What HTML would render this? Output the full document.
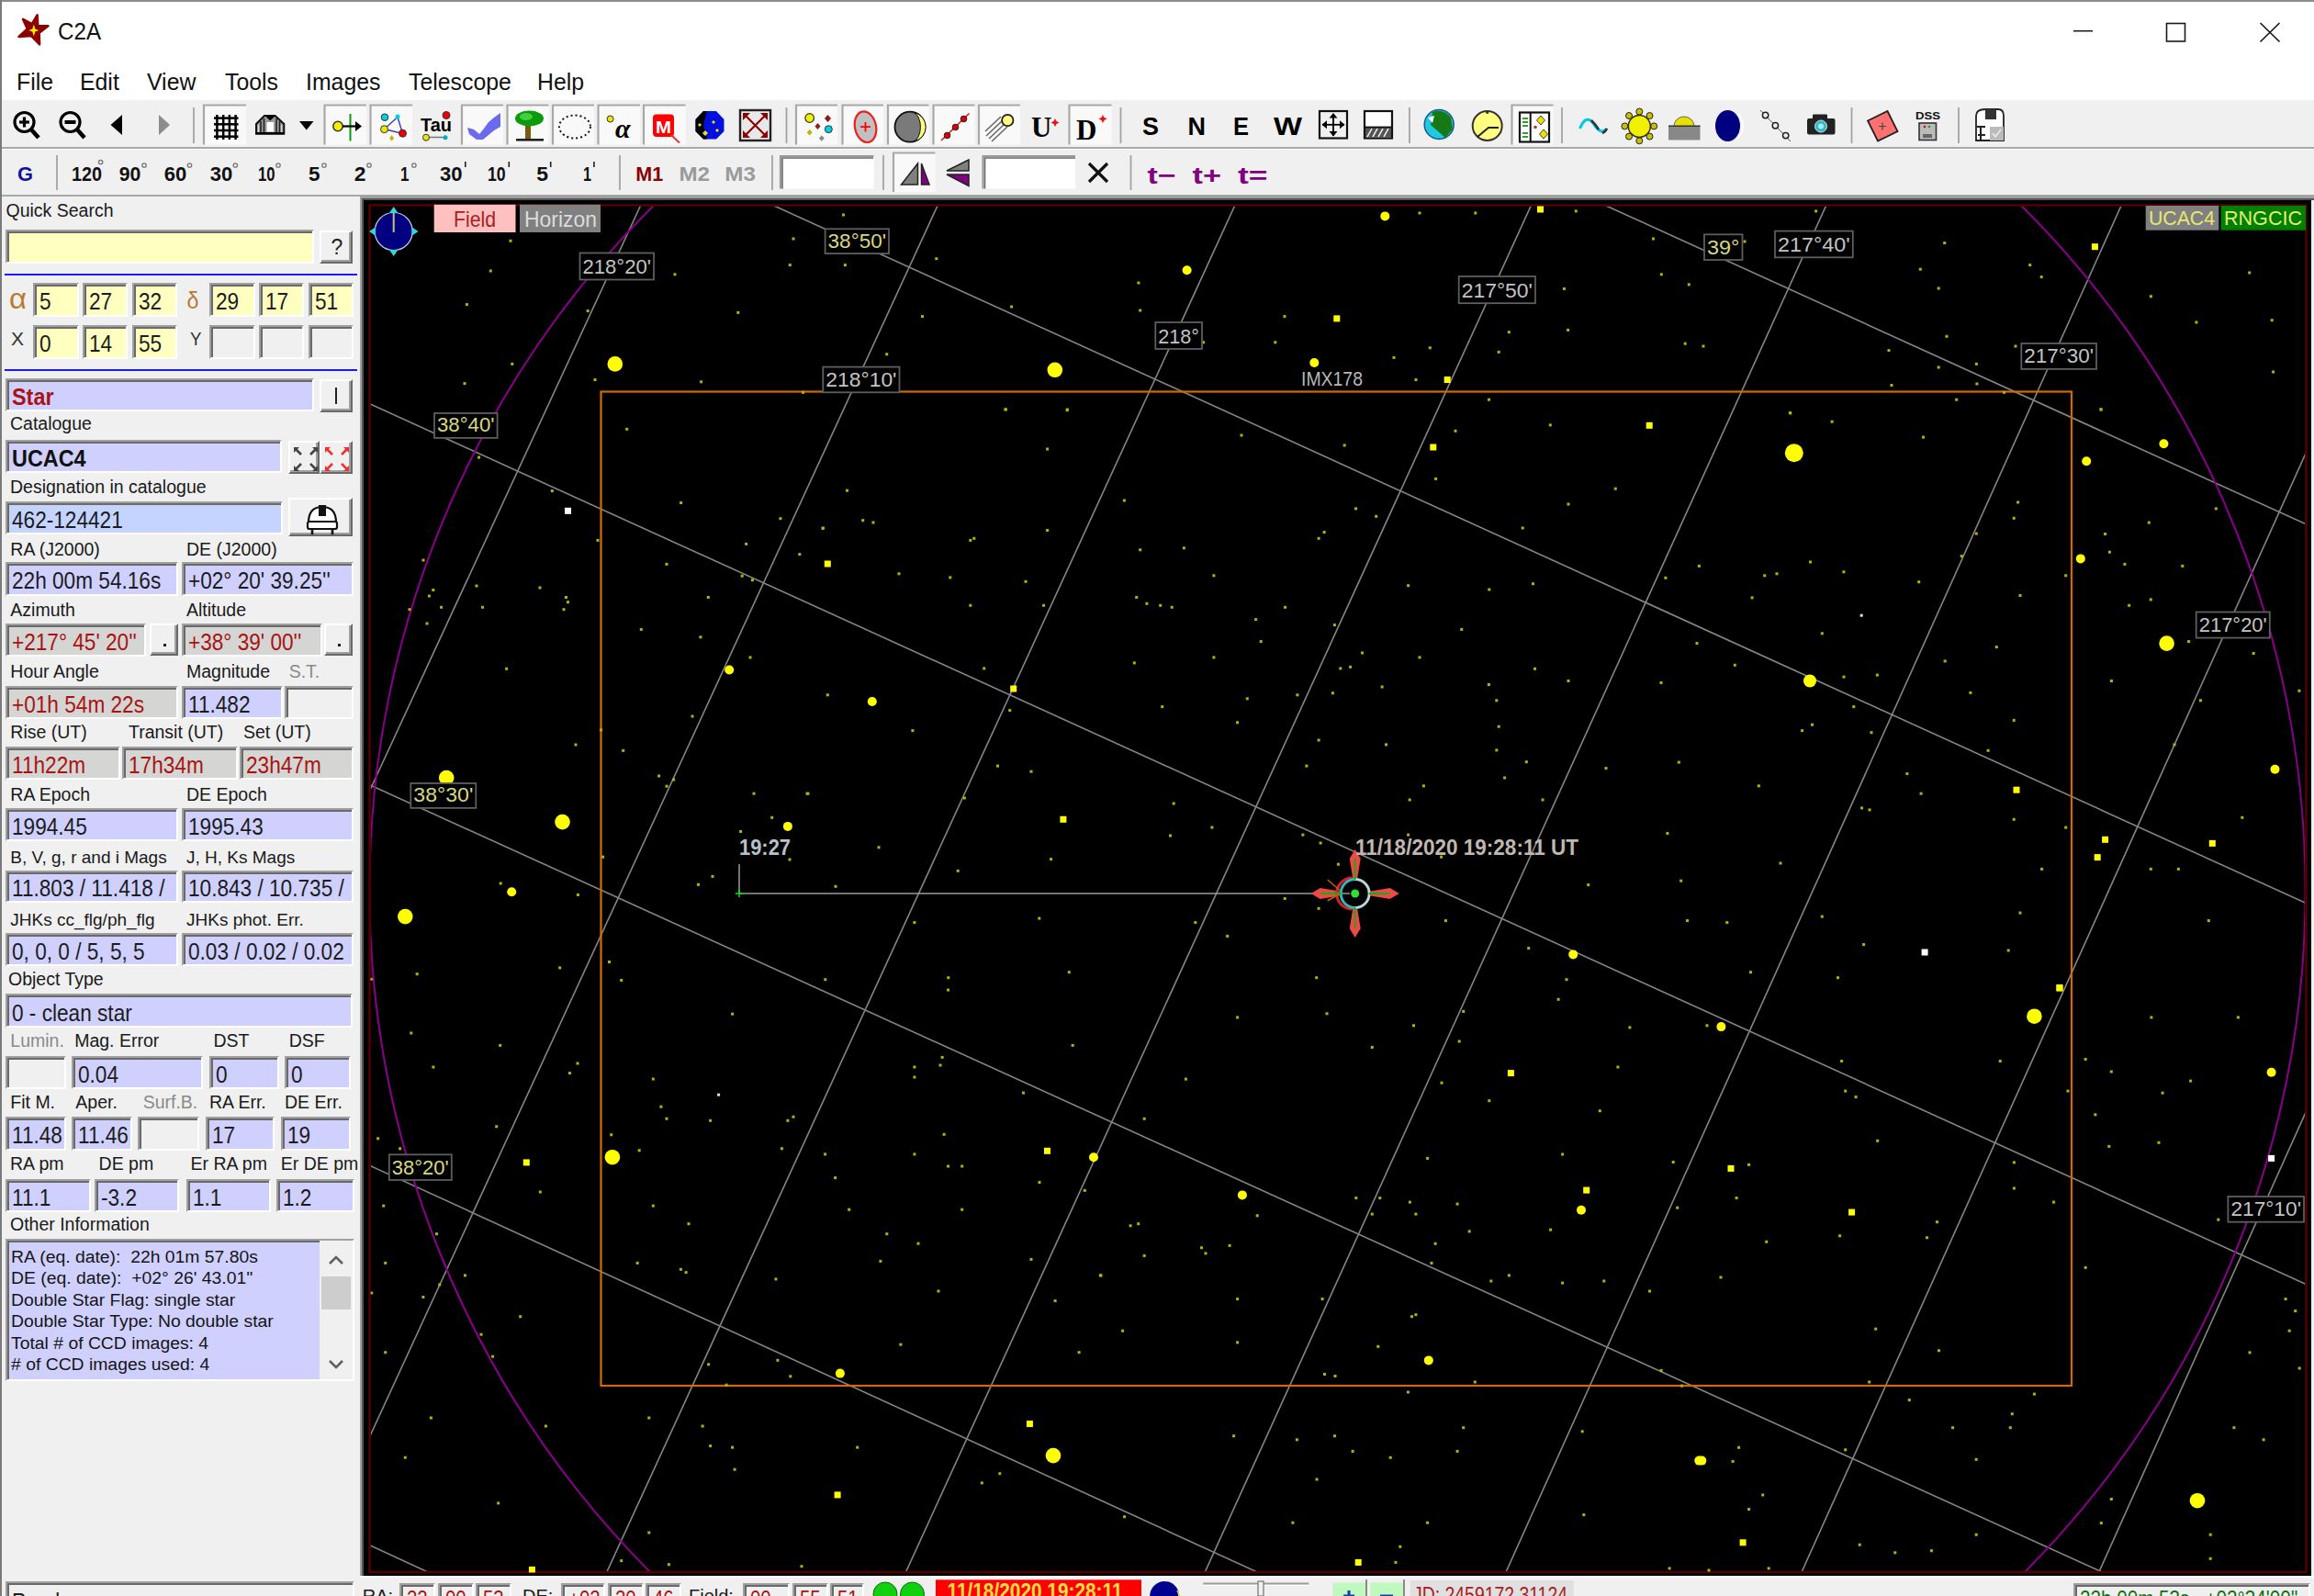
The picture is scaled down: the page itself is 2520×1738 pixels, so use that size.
<!DOCTYPE html>
<html><head><meta charset="utf-8">
<style>
html,body{margin:0;padding:0;}
body{width:2520px;height:1738px;overflow:hidden;position:relative;background:#f0f0f0;font-family:"Liberation Sans",sans-serif;}
.a{position:absolute;}
.t{position:absolute;white-space:nowrap;line-height:1;}
.lb{position:absolute;white-space:nowrap;line-height:1;font-size:19.5px;color:#1a1a1a;}
.in{position:absolute;box-sizing:border-box;border-top:2px solid #a0a0a0;border-left:2px solid #a0a0a0;border-bottom:2px solid #fff;border-right:2px solid #fff;box-shadow:inset 2px 2px 0 #6a6a6a;overflow:hidden;}
.in span{position:absolute;left:6px;white-space:nowrap;line-height:1;font-size:26px;color:#1c1c1c;transform-origin:0 0;transform:scaleX(0.87);}
.bt{position:absolute;box-sizing:border-box;background:#f0f0f0;border-top:2px solid #fff;border-left:2px solid #fff;border-bottom:2px solid #696969;border-right:2px solid #696969;box-shadow:inset -2px -2px 0 #a0a0a0;}
.lav{background:#d2d2ff;}
.yel{background:#ffffc4;}
.gry{background:#d6d6d4;}
.red span{color:#a51414;}
.sep{position:absolute;width:2px;background:#b4b4b4;border-right:1px solid #fff;}
</style></head>
<body>

<!-- window borders -->
<div class="a" style="left:0;top:0;width:2520px;height:2px;background:#8c8c8c"></div>
<div class="a" style="left:0;top:0;width:2px;height:1738px;background:#7a7a7a"></div>
<!-- title + menu bar -->
<div class="a" style="left:2px;top:2px;width:2518px;height:107px;background:#fff"></div>

<!-- toolbar lines -->
<div class="a" style="left:2px;top:160px;width:2518px;height:2px;background:#a9a9a9"></div>
<div class="a" style="left:2px;top:162px;width:2518px;height:1px;background:#fff"></div>
<div class="a" style="left:2px;top:212px;width:2518px;height:2px;background:#a9a9a9"></div>

<!-- sky frame -->
<div class="a" style="left:392px;top:213px;width:2128px;height:2.5px;background:#a0a0a0"></div>
<div class="a" style="left:392px;top:213px;width:2px;height:1505px;background:#a0a0a0"></div>
<div class="a" style="left:394px;top:215.5px;width:2126px;height:2.5px;background:#555"></div>
<div class="a" style="left:394px;top:215.5px;width:1.5px;height:1502px;background:#555"></div>
<div class="a" style="left:395.5px;top:218px;width:2121.5px;height:1497.5px;background:#000"></div>
<div class="a" style="left:392px;top:1715.5px;width:2128px;height:2.5px;background:#fafafa"></div>
<!-- title bar -->
<svg class="a" style="left:0;top:0" width="2520" height="215">
<!-- app icon star -->
<polygon points="25.0,20.9 34.7,26.2 40.6,16.3 41.2,27.9 52.4,28.3 42.7,35.7 43.1,48.4 34.1,39.1 20.5,39.9 29.8,31.5" fill="#8a0000" stroke="#8a0000" stroke-width="2.5" stroke-linejoin="round"/>
<polygon points="36.8,26.5 38.3,31.5 42.3,33 38.3,34.5 36.8,39.5 35.3,34.5 31.3,33 35.3,31.5" fill="#ffee00"/>
<!-- window controls -->
<rect x="2258" y="33" width="21" height="1.5" fill="#1a1a1a"/>
<rect x="2359.5" y="25.5" width="20" height="19.5" fill="none" stroke="#1a1a1a" stroke-width="1.6"/>
<path d="M2461.5 25 L2482.5 45.5 M2482.5 25 L2461.5 45.5" stroke="#1a1a1a" stroke-width="1.7"/>

<!-- toolbar 1 -->
<g stroke="#a3a3a3" stroke-width="1.8">
<line x1="211" y1="117" x2="211" y2="156"/>
<line x1="856.5" y1="117" x2="856.5" y2="156"/>
<line x1="1220.5" y1="117" x2="1220.5" y2="156"/>
<line x1="1535" y1="117" x2="1535" y2="156"/>
<line x1="1701" y1="117" x2="1701" y2="156"/>
<line x1="2016.5" y1="117" x2="2016.5" y2="156"/>
<line x1="2133" y1="117" x2="2133" y2="156"/>
</g>
<!-- pressed boxes -->
<g fill="#f9f9f9">
<rect x="221" y="113.5" width="47" height="44"/>
<rect x="352.5" y="113.5" width="46.5" height="44"/>
<rect x="402.5" y="113.5" width="46.5" height="44"/>
<rect x="502" y="113.5" width="46" height="44"/>
<rect x="551.5" y="113.5" width="46" height="44"/>
<rect x="601" y="113.5" width="46" height="44"/>
<rect x="650.5" y="113.5" width="46.5" height="44"/>
<rect x="700" y="113.5" width="46.5" height="44"/>
<rect x="866" y="113.5" width="46" height="44"/>
<rect x="916.5" y="113.5" width="45.5" height="44"/>
<rect x="966" y="113.5" width="45.5" height="44"/>
<rect x="1015.5" y="113.5" width="46" height="44"/>
<rect x="1065" y="113.5" width="46" height="44"/>
<rect x="1163.5" y="113.5" width="47" height="44"/>
<rect x="1645.5" y="113.5" width="46" height="44"/>
</g>
<g fill="none" stroke="#a8a8a8" stroke-width="2.2">
<path d="M222 157.5 V114.5 H268"/>
<path d="M353.5 157.5 V114.5 H399"/>
<path d="M403.5 157.5 V114.5 H449"/>
<path d="M503 157.5 V114.5 H548"/>
<path d="M552.5 157.5 V114.5 H597.5"/>
<path d="M602 157.5 V114.5 H647"/>
<path d="M651.5 157.5 V114.5 H697"/>
<path d="M701 157.5 V114.5 H746.5"/>
<path d="M867 157.5 V114.5 H912"/>
<path d="M917.5 157.5 V114.5 H962"/>
<path d="M967 157.5 V114.5 H1011.5"/>
<path d="M1016.5 157.5 V114.5 H1061.5"/>
<path d="M1066 157.5 V114.5 H1111"/>
<path d="M1164.5 157.5 V114.5 H1210.5"/>
<path d="M1646.5 157.5 V114.5 H1691.5"/>
</g>
<!-- zoom in / out -->
<g fill="none" stroke="#000" stroke-width="3.2">
<circle cx="26.5" cy="133" r="10.5"/>
<line x1="34" y1="141" x2="42" y2="150" stroke-width="4.5"/>
<line x1="21" y1="133" x2="32" y2="133"/><line x1="26.5" y1="127.5" x2="26.5" y2="138.5"/>
<circle cx="76.5" cy="133" r="10.5"/>
<line x1="84" y1="141" x2="92" y2="150" stroke-width="4.5"/>
<line x1="70.5" y1="133" x2="82.5" y2="133" stroke-width="4"/>
</g>
<polygon points="133,125 133,147 120.5,136" fill="#000"/>
<polygon points="173,125 173,147 185,136" fill="#8c8c8c"/>
<!-- grid icon -->
<g stroke="#000" stroke-width="2.5">
<line x1="236.4" y1="125" x2="236.4" y2="152"/><line x1="243.2" y1="125" x2="243.2" y2="152"/><line x1="249.9" y1="125" x2="249.9" y2="152"/><line x1="256.6" y1="125" x2="256.6" y2="152"/>
<line x1="233" y1="128.6" x2="259.5" y2="128.6"/><line x1="233" y1="135.3" x2="259.5" y2="135.3"/><line x1="233" y1="142" x2="259.5" y2="142"/><line x1="233" y1="148.7" x2="259.5" y2="148.7"/>
</g>
<!-- dome -->
<polygon points="279,145.5 279,135 288,126 299.6,126 309.3,135 309.3,145.5" fill="#9a9a9a" stroke="#111" stroke-width="2"/>
<g stroke="#222" stroke-width="1.6"><line x1="284" y1="132" x2="284" y2="145"/><line x1="287.5" y1="129" x2="287.5" y2="145"/><line x1="301" y1="129" x2="301" y2="145"/><line x1="304.5" y1="132" x2="304.5" y2="145"/></g>
<g stroke="#ddd" stroke-width="1.2"><line x1="281.5" y1="136" x2="281.5" y2="144"/><line x1="306.5" y1="136" x2="306.5" y2="144"/></g>
<polygon points="288.5,126 300,126 294.2,131.5" fill="#000"/>
<rect x="290.5" y="133" width="7.5" height="10.5" fill="#fff"/>
<rect x="278.5" y="144" width="31.5" height="2.5" fill="#000"/>
<polygon points="326,132 341.5,132 333.75,141.5" fill="#000"/>
<!-- target icon -->
<circle cx="368" cy="137.5" r="5.2" fill="#f0f000" stroke="#333" stroke-width="1.5"/>
<line x1="381.5" y1="124" x2="381.5" y2="153.5" stroke="#0a9a0a" stroke-width="2"/>
<line x1="373" y1="137.5" x2="389" y2="137.5" stroke="#000" stroke-width="2.2"/>
<polygon points="387,132 394,137.5 387,143" fill="#000"/>
<!-- triangle stars -->
<path d="M433 127.5 L418.5 140.5 L438.5 145.5 Z" fill="none" stroke="#4040c0" stroke-width="1.5"/>
<circle cx="419" cy="127.7" r="3.8" fill="#00d0e0" stroke="#333" stroke-width="1"/>
<circle cx="433" cy="127" r="2.5" fill="#00d0e0"/>
<circle cx="418.5" cy="140.7" r="4" fill="#e8e800" stroke="#333" stroke-width="1"/>
<circle cx="438.5" cy="145.2" r="4" fill="#f00000" stroke="#333" stroke-width="1"/>
<polygon points="426.6,147 429,150.4 426.6,153.8 424.2,150.4" fill="#c8b000"/>
<!-- Tau -->
<text x="458" y="143" font-family="Liberation Sans" font-weight="bold" font-size="21" fill="#000" textLength="34" lengthAdjust="spacingAndGlyphs">Tau</text>
<circle cx="486" cy="125.5" r="4" fill="#f00000" stroke="#333" stroke-width="1"/>
<line x1="464" y1="149.5" x2="485" y2="149.5" stroke="#777" stroke-width="1.5"/>
<circle cx="464" cy="149.7" r="3.5" fill="#e8e800" stroke="#333" stroke-width="1"/>
<circle cx="485" cy="149.7" r="2.5" fill="#00b0c0"/>
<!-- milky way -->
<path d="M509 139 L516 141 L522 146 L527 140 L532 133 L538 128 L545 123 L545 138 L538 142 L532 147 L526 152 L519 152 L511 146 Z" fill="#6a6aee"/>
<!-- tree -->
<rect x="572" y="135" width="6" height="16" fill="#7a5a10"/>
<ellipse cx="576.5" cy="129" rx="15.5" ry="8.5" fill="#0a9a0a"/>
<ellipse cx="573" cy="127" rx="7" ry="4" fill="#40d040"/>
<rect x="562" y="151" width="30" height="2.6" fill="#222"/>
<!-- dotted ellipse -->
<ellipse cx="626" cy="138" rx="17" ry="12.5" fill="none" stroke="#111" stroke-width="2" stroke-dasharray="2 3"/>
<!-- alpha -->
<circle cx="664.6" cy="129.5" r="3.5" fill="#e8e800" stroke="#333" stroke-width="1"/>
<text x="670" y="150" font-family="Liberation Serif" font-style="italic" font-weight="bold" font-size="30" fill="#000">α</text>
<!-- M -->
<rect x="711" y="124.5" width="23" height="24.5" rx="4" fill="#f00" />
<text x="714" y="145" font-family="Liberation Sans" font-weight="bold" font-size="19" fill="#fff" textLength="17" lengthAdjust="spacingAndGlyphs">M</text>
<line x1="731" y1="147" x2="740" y2="155.5" stroke="#f03030" stroke-width="2"/>
<!-- globe -->
<polygon points="766,121 780,121 788.5,130 788.5,143 780,151.5 766,151.5 757.5,143 757.5,130" fill="#0010e0"/>
<path d="M766 121 L770 121 L766 136 L770 151.5 L766 151.5 L757.5 143 L757.5 130 Z" fill="#000"/>
<g fill="#f0e000"><polygon points="768,142 771,145 768,148 765,145"/><polygon points="777,131 779,133 777,135 775,133"/><polygon points="781,140 783,142 781,144 779,142"/><polygon points="762,134 764,136 762,138 760,136"/></g>
<!-- X arrows box -->
<rect x="806" y="120" width="33" height="33" fill="#e8e8e8" stroke="#222" stroke-width="2.4"/>
<g stroke="#8b0000" stroke-width="2.2"><line x1="810" y1="124" x2="835" y2="149"/><line x1="835" y1="124" x2="810" y2="149"/></g>
<g fill="#8b0000"><polygon points="809,123 817,123 809,131"/><polygon points="836,123 828,123 836,131"/><polygon points="809,150 817,150 809,142"/><polygon points="836,150 828,150 836,142"/></g>
<!-- stars icon -->
<circle cx="881.7" cy="128.5" r="4.8" fill="#f0f000" stroke="#333" stroke-width="1.2"/>
<polygon points="901.5,125 905,129 901.5,133 898,129" fill="#8b1a1a"/>
<polygon points="890.5,134 893.5,137.5 890.5,141 887.5,137.5" fill="#8b1a1a"/>
<circle cx="902.3" cy="140.7" r="4" fill="#00d0e0" stroke="#333" stroke-width="1"/>
<polygon points="881.7,141 884.7,144.2 881.7,147.4 878.7,144.2" fill="#c8b000"/>
<polygon points="894.8,147.5 897.8,150.6 894.8,153.7 891.8,150.6" fill="#888"/>
<!-- red ellipse -->
<ellipse cx="942.5" cy="138.2" rx="11.5" ry="17" transform="rotate(-12 942.5 138.2)" fill="#c0c0c0" stroke="#f02020" stroke-width="2.2"/>
<path d="M942.5 133 V143.5 M937 138.2 H948" stroke="#f00" stroke-width="1.8"/>
<!-- moon -->
<circle cx="991" cy="138.2" r="16.5" fill="#7a7a7a" stroke="#111" stroke-width="1.8"/>
<path d="M995 122.5 A16 16 0 0 1 995 154 A9 16 0 0 0 995 122.5 Z" fill="#ffff80" stroke="#111" stroke-width="1"/>
<!-- red dotted line -->
<line x1="1025" y1="153" x2="1055.5" y2="123.5" stroke="#e01010" stroke-width="1.5"/>
<g fill="#e00000" stroke="#222" stroke-width="1"><circle cx="1031.5" cy="147.5" r="3.3"/><circle cx="1040.5" cy="138.5" r="3.3"/><circle cx="1049.5" cy="129.5" r="3.3"/></g>
<!-- comet -->
<g stroke="#666" stroke-width="1.6"><line x1="1092" y1="131" x2="1074" y2="148"/><line x1="1094" y1="135" x2="1077" y2="151"/><line x1="1097" y1="138" x2="1080" y2="154"/><line x1="1090" y1="127" x2="1073" y2="143"/></g>
<circle cx="1097.3" cy="131" r="6.2" fill="#ffff80" stroke="#222" stroke-width="1.8"/>
<!-- U+ D+ -->
<text x="1123" y="149" font-family="Liberation Serif" font-weight="bold" font-size="31" fill="#000">U</text>
<polygon points="1149,129 1150.5,132 1153.5,133.4 1150.5,135 1149,138 1147.5,135 1144.5,133.4 1147.5,132" fill="#f01010"/>
<text x="1172" y="152" font-family="Liberation Serif" font-weight="bold" font-size="31" fill="#000">D</text>
<polygon points="1201,125 1202.5,128 1205.5,129.3 1202.5,131 1201,134 1199.5,131 1196.5,129.3 1199.5,128" fill="#f01010"/>
<!-- S N E W -->
<g font-family="Liberation Sans" font-weight="bold" font-size="28" fill="#000">
<text x="1244" y="146.5" textLength="18" lengthAdjust="spacingAndGlyphs">S</text>
<text x="1293.5" y="146.5" textLength="19.5" lengthAdjust="spacingAndGlyphs">N</text>
<text x="1343" y="146.5" textLength="17" lengthAdjust="spacingAndGlyphs">E</text>
<text x="1387" y="146.5" textLength="31" lengthAdjust="spacingAndGlyphs">W</text>
</g>
<!-- move box -->
<rect x="1437" y="121" width="30" height="29.5" fill="none" stroke="#111" stroke-width="2.2"/>
<g stroke="#000" stroke-width="1.8"><line x1="1452" y1="124" x2="1452" y2="148"/><line x1="1440" y1="135.8" x2="1464" y2="135.8"/></g>
<g fill="#000"><polygon points="1452,123 1456.5,128.5 1447.5,128.5"/><polygon points="1452,148.5 1456.5,143 1447.5,143"/><polygon points="1439.5,135.8 1445,131.3 1445,140.3"/><polygon points="1464.5,135.8 1459,131.3 1459,140.3"/></g>
<!-- hatched rect -->
<rect x="1486" y="121" width="30" height="29.5" fill="#fff" stroke="#111" stroke-width="2.2"/>
<rect x="1487" y="139" width="28" height="10.5" fill="#555"/>
<g stroke="#fff" stroke-width="1.5"><line x1="1489" y1="149" x2="1494" y2="140"/><line x1="1495" y1="149" x2="1500" y2="140"/><line x1="1501" y1="149" x2="1506" y2="140"/><line x1="1507" y1="149" x2="1512" y2="140"/></g>
<line x1="1486" y1="138.5" x2="1516" y2="138.5" stroke="#111" stroke-width="1.8"/>
<!-- earth -->
<circle cx="1567.2" cy="135.5" r="16" fill="#20c8e0" stroke="#1a5a8a" stroke-width="1.5"/>
<path d="M1560 122 Q1572 118 1580 128 L1582 140 L1574 150 L1566 143 L1558 136 Z" fill="#157a15"/>
<path d="M1555 128 L1562 126 L1560 134 Z" fill="#fff"/>
<!-- clock -->
<circle cx="1619.7" cy="137" r="16" fill="#ffff80" stroke="#333" stroke-width="2"/>
<path d="M1609 149 L1621 139 L1632 139" fill="none" stroke="#222" stroke-width="2"/>
<circle cx="1619.7" cy="122.5" r="1.5" fill="#333"/>
<!-- split icon -->
<rect x="1655" y="122.5" width="32" height="32" fill="#fff" stroke="#111" stroke-width="2.2"/>
<line x1="1666.7" y1="122" x2="1666.7" y2="155" stroke="#111" stroke-width="2"/>
<g stroke="#30a030" stroke-width="2"><line x1="1658" y1="129" x2="1664" y2="129"/><line x1="1658" y1="133" x2="1664" y2="133"/><line x1="1658" y1="137" x2="1664" y2="137"/><line x1="1658" y1="145" x2="1664" y2="145"/><line x1="1658" y1="149" x2="1664" y2="149"/></g>
<polygon points="1678,126 1682.5,131 1678,136 1673.5,131" fill="#f0e000" stroke="#444" stroke-width="1"/>
<polygon points="1681,141 1685.5,146 1681,151 1676.5,146" fill="#f0e000" stroke="#444" stroke-width="1"/>
<circle cx="1672" cy="138.5" r="1.8" fill="#c03030"/>
<!-- wave -->
<path d="M1720.5 140 Q1727 124 1735 134 Q1743 148 1750 140" fill="none" stroke="#00c8e8" stroke-width="3"/>
<path d="M1733 131 Q1738 136 1741 141 M1745 145 Q1748 144 1750 140" fill="none" stroke="#333" stroke-width="2.5"/>
<!-- sun -->
<g fill="#c8c000" stroke="#222" stroke-width="1">
<circle cx="1785.3" cy="121.5" r="3.5"/><circle cx="1785.3" cy="153.3" r="3.5"/><circle cx="1769.4" cy="137.4" r="3.5"/><circle cx="1801.2" cy="137.4" r="3.5"/>
<circle cx="1774" cy="126" r="3.5"/><circle cx="1796.5" cy="126" r="3.5"/><circle cx="1774" cy="148.6" r="3.5"/><circle cx="1796.5" cy="148.6" r="3.5"/>
</g>
<circle cx="1785.3" cy="137.4" r="12" fill="#f0f000" stroke="#333" stroke-width="1.5"/>
<!-- dome -->
<path d="M1823 137.5 A11 10.5 0 0 1 1845 137.5 Z" fill="#e8e000" stroke="#666" stroke-width="1"/>
<rect x="1817" y="137" width="34.5" height="15.5" fill="#888"/>
<rect x="1817" y="136.5" width="34.5" height="1.5" fill="#333"/>
<!-- navy ellipse -->
<ellipse cx="1881.5" cy="137" rx="13.5" ry="17" fill="#000080"/>
<path d="M1893 124 A13.5 17 0 0 1 1893 150" fill="none" stroke="#fff" stroke-width="2"/>
<!-- dotted line -->
<line x1="1917" y1="120" x2="1950" y2="154" stroke="#555" stroke-width="1"/>
<g fill="#eee" stroke="#222" stroke-width="1.5"><circle cx="1922.6" cy="125.5" r="3.2"/><circle cx="1933.4" cy="136.8" r="3.2"/><circle cx="1944.7" cy="147.6" r="3.2"/></g>
<!-- camera -->
<rect x="1968" y="129" width="30.5" height="17.5" rx="2" fill="#222"/>
<rect x="1974" y="124.5" width="16" height="6" rx="1" fill="#222"/>
<circle cx="1983" cy="137.5" r="6.5" fill="#30b8d0" stroke="#ddd" stroke-width="1"/>
<circle cx="1983" cy="137.5" r="3" fill="#a0f0ff"/>
<!-- red diamond -->
<polygon points="2034,131.5 2055.5,121 2066.5,143 2045,153.5" fill="#ff7070" stroke="#222" stroke-width="1.8"/>
<path d="M2046 137.5 h8 M2050 133.5 v8" stroke="#444" stroke-width="1.2"/>
<!-- DSS -->
<text x="2086" y="130" font-family="Liberation Sans" font-weight="bold" font-size="10.5" fill="#111" textLength="27" lengthAdjust="spacingAndGlyphs">DSS</text>
<rect x="2090" y="134" width="18.5" height="18.5" fill="#bbb" stroke="#333" stroke-width="1.6"/>
<rect x="2094" y="146" width="10" height="4" fill="#666"/>
<circle cx="2096" cy="138" r="1.3" fill="#e00"/><circle cx="2101" cy="138" r="1.3" fill="#0b0"/>
<!-- floppy -->
<path d="M2152 126 Q2152 119 2162 119 L2176 119 Q2182 119 2182 126 L2182 153 L2152 153 Z" fill="#fff" stroke="#222" stroke-width="1.8"/>
<rect x="2162" y="119" width="12" height="11" fill="#333"/>
<rect x="2167" y="138" width="15" height="15" fill="#bbb"/>
<path d="M2170 145 L2173 149 L2179 141" fill="none" stroke="#eee" stroke-width="1.6"/>
<path d="M2153 138 L2162 138 M2157 138 L2157 153 M2154 147 L2162 147" stroke="#222" stroke-width="2"/>

<!-- toolbar 2 -->
<g stroke="#a3a3a3" stroke-width="1.8">
<line x1="62" y1="169" x2="62" y2="207"/>
<line x1="675" y1="169" x2="675" y2="207"/>
<line x1="841" y1="169" x2="841" y2="207"/>
<line x1="962" y1="169" x2="962" y2="207"/>
<line x1="1231.5" y1="169" x2="1231.5" y2="207"/>
</g>
<g font-family="Liberation Sans" font-weight="bold" font-size="21.5" fill="#111">
<text x="19" y="197.2" fill="#1010a0" textLength="17" lengthAdjust="spacingAndGlyphs">G</text>
<text x="78" y="197.2" textLength="33" lengthAdjust="spacingAndGlyphs">120</text>
<text x="129.8" y="197.2" textLength="23.6" lengthAdjust="spacingAndGlyphs">90</text>
<text x="178.8" y="197.2" textLength="24.5" lengthAdjust="spacingAndGlyphs">60</text>
<text x="228.7" y="197.2" textLength="24.5" lengthAdjust="spacingAndGlyphs">30</text>
<text x="281" y="197.2" textLength="18.5" lengthAdjust="spacingAndGlyphs">10</text>
<text x="336" y="197.2" textLength="12.5" lengthAdjust="spacingAndGlyphs">5</text>
<text x="385.7" y="197.2" textLength="12.7" lengthAdjust="spacingAndGlyphs">2</text>
<text x="436" y="197.2" textLength="9.4" lengthAdjust="spacingAndGlyphs">1</text>
<text x="479" y="197.2" textLength="24.5" lengthAdjust="spacingAndGlyphs">30</text>
<text x="531" y="197.2" textLength="19.7" lengthAdjust="spacingAndGlyphs">10</text>
<text x="584.2" y="197.2" textLength="12.8" lengthAdjust="spacingAndGlyphs">5</text>
<text x="635" y="197.2" textLength="9" lengthAdjust="spacingAndGlyphs">1</text>
<text x="692.2" y="197.2" fill="#8b0000" textLength="30" lengthAdjust="spacingAndGlyphs">M1</text>
<text x="739.4" y="197.2" fill="#9a9a9a" textLength="33.6" lengthAdjust="spacingAndGlyphs">M2</text>
<text x="789.3" y="197.2" fill="#9a9a9a" textLength="33.7" lengthAdjust="spacingAndGlyphs">M3</text>
</g>
<g fill="none" stroke="#777" stroke-width="1.3">
<circle cx="109.6" cy="176.5" r="2.2"/><circle cx="157" cy="180" r="2.2"/><circle cx="206.5" cy="180" r="2.2"/><circle cx="256.3" cy="180" r="2.2"/><circle cx="303" cy="180" r="2.2"/><circle cx="353" cy="180" r="2.2"/><circle cx="402" cy="180" r="2.2"/><circle cx="450.9" cy="180" r="2.2"/>
</g>
<g stroke="#222" stroke-width="1.6">
<line x1="506.8" y1="176" x2="506.8" y2="182"/><line x1="554.3" y1="176" x2="554.3" y2="182"/><line x1="599.7" y1="176" x2="599.7" y2="182"/><line x1="646.9" y1="176" x2="646.9" y2="182"/>
</g>
<!-- inputs -->
<rect x="849" y="169" width="102.5" height="36.5" fill="#fff"/>
<path d="M850 205.5 V170 H951.5" fill="none" stroke="#9a9a9a" stroke-width="2.2"/>
<path d="M852 205.5 V172 H951" fill="none" stroke="#6a6a6a" stroke-width="1.6"/>
<rect x="1069.5" y="169" width="101.5" height="36.5" fill="#fff"/>
<path d="M1070.5 205.5 V170 H1171" fill="none" stroke="#9a9a9a" stroke-width="2.2"/>
<path d="M1072.5 205.5 V172 H1171" fill="none" stroke="#6a6a6a" stroke-width="1.6"/>
<!-- mirror pressed -->
<rect x="972" y="165.5" width="46.5" height="43.5" fill="#f9f9f9"/>
<path d="M973 209 V166.5 H1018.5" fill="none" stroke="#a8a8a8" stroke-width="2.2"/>
<polygon points="999.5,178 999.5,201 981.5,201" fill="#808080" stroke="#222" stroke-width="1.5"/>
<polygon points="1003.5,178 1003.5,201 1012,201" fill="#800080" stroke="#222" stroke-width="1.5"/>
<polygon points="1055,174 1055,186 1031,186" fill="#808080" stroke="#222" stroke-width="1.5"/>
<polygon points="1055,190 1055,202.5 1031,190" fill="#800080" stroke="#222" stroke-width="1.5"/>
<path d="M1186 178 L1206 198 M1206 178 L1186 198" stroke="#111" stroke-width="3.2"/>
<g font-family="Liberation Sans" font-weight="bold" font-size="26" fill="#800080">
<text x="1249.5" y="199.5" textLength="31" lengthAdjust="spacingAndGlyphs">t−</text>
<text x="1298.5" y="199.5" textLength="31.5" lengthAdjust="spacingAndGlyphs">t+</text>
<text x="1348" y="199.5" textLength="32.5" lengthAdjust="spacingAndGlyphs">t=</text>
</g>
</svg>
<div class="t" style="left:63.4px;top:21.3px;font-size:26px;color:#111;transform:scaleX(0.93);transform-origin:0 0">C2A</div>
<div class="t" style="left:18px;top:75.5px;font-size:26px;color:#111;transform-origin:0 0;">
<span class="t" style="transform:scaleX(0.955);transform-origin:0 0;left:0">File</span><span class="t" style="transform:scaleX(0.955);transform-origin:0 0;left:69px">Edit</span><span class="t" style="transform:scaleX(0.955);transform-origin:0 0;left:141.7px">View</span><span class="t" style="transform:scaleX(0.955);transform-origin:0 0;left:226.8px">Tools</span><span class="t" style="transform:scaleX(0.955);transform-origin:0 0;left:314.6px">Images</span><span class="t" style="transform:scaleX(0.955);transform-origin:0 0;left:427.3px">Telescope</span><span class="t" style="transform:scaleX(0.955);transform-origin:0 0;left:567.3px">Help</span>
</div>
<div class="a" style="left:388px;top:214px;width:4px;height:1504px;background:#f0f0f0"></div>
<div class="t" style="left:6.5px;top:219.7px;font-size:19.5px;color:#1a1a1a;">Quick Search</div>
<div class="in" style="left:5.5px;top:249.5px;width:336.5px;height:37.5px;background:#ffffc0"></div>
<div class="bt" style="left:347.5px;top:250.5px;width:36.5px;height:36.5px"><div class="t" style="left:11px;top:5px;font-size:23px;color:#222">?</div></div>
<div class="a" style="left:5px;top:297.5px;width:384px;height:2.5px;background:#1a1aff"></div>
<svg class="a" style="left:0;top:300px" width="230" height="100"><text x="10" y="36" font-family="Liberation Sans" font-size="31" fill="#b87a30" textLength="19" lengthAdjust="spacingAndGlyphs">α</text><text x="203.5" y="36" font-family="Liberation Sans" font-size="26" fill="#b87a30" textLength="13" lengthAdjust="spacingAndGlyphs">δ</text><text x="12" y="75.6" font-family="Liberation Sans" font-size="19.5" fill="#333" textLength="14" lengthAdjust="spacingAndGlyphs">X</text><text x="207" y="75.6" font-family="Liberation Sans" font-size="19.5" fill="#333" textLength="12.5" lengthAdjust="spacingAndGlyphs">Y</text></svg>
<div class="in" style="left:36.0px;top:307.5px;width:49.5px;height:37.5px;background:#ffffc0"></div>
<div class="t" style="left:43.0px;top:315.4px;font-size:26.0px;color:#1c1c1c;transform:scaleX(0.870);transform-origin:0 0;">5</div>
<div class="in" style="left:90.0px;top:307.5px;width:49.0px;height:37.5px;background:#ffffc0"></div>
<div class="t" style="left:97.0px;top:315.4px;font-size:26.0px;color:#1c1c1c;transform:scaleX(0.870);transform-origin:0 0;">27</div>
<div class="in" style="left:143.5px;top:307.5px;width:49.5px;height:37.5px;background:#ffffc0"></div>
<div class="t" style="left:150.5px;top:315.4px;font-size:26.0px;color:#1c1c1c;transform:scaleX(0.870);transform-origin:0 0;">32</div>
<div class="in" style="left:228.0px;top:307.5px;width:49.5px;height:37.5px;background:#ffffc0"></div>
<div class="t" style="left:235.0px;top:315.4px;font-size:26.0px;color:#1c1c1c;transform:scaleX(0.870);transform-origin:0 0;">29</div>
<div class="in" style="left:282.0px;top:307.5px;width:49.0px;height:37.5px;background:#ffffc0"></div>
<div class="t" style="left:289.0px;top:315.4px;font-size:26.0px;color:#1c1c1c;transform:scaleX(0.870);transform-origin:0 0;">17</div>
<div class="in" style="left:335.5px;top:307.5px;width:49.5px;height:37.5px;background:#ffffc0"></div>
<div class="t" style="left:342.5px;top:315.4px;font-size:26.0px;color:#1c1c1c;transform:scaleX(0.870);transform-origin:0 0;">51</div>
<div class="in" style="left:36.0px;top:353.5px;width:49.5px;height:37.5px;background:#ffffc0"></div>
<div class="t" style="left:43.0px;top:361.4px;font-size:26.0px;color:#1c1c1c;transform:scaleX(0.870);transform-origin:0 0;">0</div>
<div class="in" style="left:90.0px;top:353.5px;width:49.0px;height:37.5px;background:#ffffc0"></div>
<div class="t" style="left:97.0px;top:361.4px;font-size:26.0px;color:#1c1c1c;transform:scaleX(0.870);transform-origin:0 0;">14</div>
<div class="in" style="left:143.5px;top:353.5px;width:49.5px;height:37.5px;background:#ffffc0"></div>
<div class="t" style="left:150.5px;top:361.4px;font-size:26.0px;color:#1c1c1c;transform:scaleX(0.870);transform-origin:0 0;">55</div>
<div class="in" style="left:228.0px;top:353.5px;width:49.5px;height:37.5px;background:#f0f0f0"></div>
<div class="in" style="left:282.0px;top:353.5px;width:49.0px;height:37.5px;background:#f0f0f0"></div>
<div class="in" style="left:335.5px;top:353.5px;width:49.5px;height:37.5px;background:#f0f0f0"></div>
<div class="a" style="left:5px;top:401.5px;width:384px;height:2.5px;background:#1a1aff"></div>
<div class="in" style="left:5.5px;top:411.5px;width:336.5px;height:36.5px;background:#d0d0ff"></div>
<div class="t" style="left:12.5px;top:418.9px;font-size:26.0px;color:#a81414;transform:scaleX(0.900);transform-origin:0 0;font-weight:bold;">Star</div>
<div class="bt" style="left:347.5px;top:413.0px;width:36.5px;height:36.0px"><div class="a" style="left:15px;top:7px;width:2.5px;height:18px;background:#222"></div></div>
<div class="t" style="left:11.0px;top:452.2px;font-size:19.5px;color:#1a1a1a;">Catalogue</div>
<div class="in" style="left:5.5px;top:478.5px;width:301.5px;height:36.5px;background:#d0d0ff"></div>
<div class="t" style="left:12.5px;top:485.9px;font-size:26.0px;color:#111;transform:scaleX(0.900);transform-origin:0 0;font-weight:bold;">UCAC4</div>
<div class="bt" style="left:313.5px;top:479.5px;width:34.0px;height:36.5px"><svg class="a" style="left:0;top:0" width="34" height="36"><g stroke="#444" stroke-width="2.6"><line x1="5" y1="6" x2="12" y2="13"/><line x1="29" y1="6" x2="22" y2="13"/><line x1="5" y1="30" x2="12" y2="23"/><line x1="29" y1="30" x2="22" y2="23"/></g><g fill="#444"><polygon points="4,5 10,5 4,11"/><polygon points="30,5 24,5 30,11"/><polygon points="4,31 10,31 4,25"/><polygon points="30,31 24,31 30,25"/></g></svg></div>
<div class="bt" style="left:347.5px;top:479.5px;width:36.5px;height:36.5px"><svg class="a" style="left:0;top:0" width="34" height="36"><g stroke="#f03030" stroke-width="2.6"><line x1="5" y1="6" x2="12" y2="13"/><line x1="29" y1="6" x2="22" y2="13"/><line x1="5" y1="30" x2="12" y2="23"/><line x1="29" y1="30" x2="22" y2="23"/></g><g fill="#f03030"><polygon points="4,5 10,5 4,11"/><polygon points="30,5 24,5 30,11"/><polygon points="4,31 10,31 4,25"/><polygon points="30,31 24,31 30,25"/></g></svg></div>
<div class="t" style="left:11.0px;top:521.2px;font-size:19.5px;color:#1a1a1a;">Designation in catalogue</div>
<div class="in" style="left:5.5px;top:545.5px;width:302.5px;height:36.5px;background:#c4d4ff"></div>
<div class="t" style="left:12.5px;top:552.9px;font-size:26.0px;color:#1c1c1c;transform:scaleX(0.870);transform-origin:0 0;">462-124421</div>
<div class="bt" style="left:313.5px;top:542.0px;width:70.0px;height:42.0px"><svg class="a" style="left:0;top:0" width="70" height="42"><path d="M20 25 Q20 8 35 8 Q50 8 50 25 Z" fill="#fff" stroke="#111" stroke-width="2.2"/><rect x="31" y="6" width="8" height="12" fill="#111"/><rect x="19" y="24" width="32" height="8" rx="2" fill="#fff" stroke="#111" stroke-width="2.2"/><path d="M24 32 L24 38 M46 32 L46 38" stroke="#111" stroke-width="2.6"/></svg></div>
<div class="t" style="left:11.3px;top:588.5px;font-size:19.5px;color:#1a1a1a;">RA (J2000)</div>
<div class="t" style="left:203.0px;top:588.5px;font-size:19.5px;color:#1a1a1a;">DE (J2000)</div>
<div class="in" style="left:5.5px;top:612.0px;width:188.0px;height:36.5px;background:#d0d0ff"></div>
<div class="t" style="left:12.5px;top:619.4px;font-size:26.0px;color:#1c1c1c;transform:scaleX(0.870);transform-origin:0 0;">22h 00m 54.16s</div>
<div class="in" style="left:197.5px;top:612.0px;width:187.0px;height:36.5px;background:#d0d0ff"></div>
<div class="t" style="left:204.5px;top:619.4px;font-size:26.0px;color:#1c1c1c;transform:scaleX(0.870);transform-origin:0 0;">+02° 20' 39.25''</div>
<div class="t" style="left:11.3px;top:655.0px;font-size:19.5px;color:#1a1a1a;">Azimuth</div>
<div class="t" style="left:203.0px;top:655.0px;font-size:19.5px;color:#1a1a1a;">Altitude</div>
<div class="in" style="left:5.5px;top:679.0px;width:153.5px;height:36.0px;background:#d5d5d3"></div>
<div class="t" style="left:12.5px;top:686.1px;font-size:26.0px;color:#a81414;transform:scaleX(0.870);transform-origin:0 0;">+217° 45' 20''</div>
<div class="bt" style="left:162.5px;top:679.0px;width:31.5px;height:35.0px"><div class="a" style="left:13px;top:20px;width:3px;height:3px;background:#222"></div></div>
<div class="in" style="left:197.5px;top:679.0px;width:153.5px;height:36.0px;background:#d5d5d3"></div>
<div class="t" style="left:204.5px;top:686.1px;font-size:26.0px;color:#a81414;transform:scaleX(0.870);transform-origin:0 0;">+38° 39' 00''</div>
<div class="bt" style="left:353.0px;top:679.0px;width:30.5px;height:35.0px"><div class="a" style="left:13px;top:20px;width:3px;height:3px;background:#222"></div></div>
<div class="t" style="left:11.3px;top:721.7px;font-size:19.5px;color:#1a1a1a;">Hour Angle</div>
<div class="t" style="left:203.0px;top:721.7px;font-size:19.5px;color:#1a1a1a;">Magnitude</div>
<div class="t" style="left:314.7px;top:721.7px;font-size:19.5px;color:#8a8a8a;">S.T.</div>
<div class="in" style="left:5.5px;top:746.5px;width:188.0px;height:36.0px;background:#d5d5d3"></div>
<div class="t" style="left:12.5px;top:753.6px;font-size:26.0px;color:#a81414;transform:scaleX(0.870);transform-origin:0 0;">+01h 54m 22s</div>
<div class="in" style="left:197.5px;top:746.5px;width:110.5px;height:36.0px;background:#d0d0ff"></div>
<div class="t" style="left:204.5px;top:753.6px;font-size:26.0px;color:#1c1c1c;transform:scaleX(0.870);transform-origin:0 0;">11.482</div>
<div class="in" style="left:310.0px;top:746.5px;width:74.5px;height:36.0px;background:#f0f0f0"></div>
<div class="t" style="left:11.3px;top:788.3px;font-size:19.5px;color:#1a1a1a;">Rise (UT)</div>
<div class="t" style="left:140.0px;top:788.3px;font-size:19.5px;color:#1a1a1a;">Transit (UT)</div>
<div class="t" style="left:265.0px;top:788.3px;font-size:19.5px;color:#1a1a1a;">Set (UT)</div>
<div class="in" style="left:5.5px;top:813.0px;width:125.5px;height:36.0px;background:#d5d5d3"></div>
<div class="t" style="left:12.5px;top:820.1px;font-size:26.0px;color:#a81414;transform:scaleX(0.870);transform-origin:0 0;">11h22m</div>
<div class="in" style="left:133.0px;top:813.0px;width:125.5px;height:36.0px;background:#d5d5d3"></div>
<div class="t" style="left:140.0px;top:820.1px;font-size:26.0px;color:#a81414;transform:scaleX(0.870);transform-origin:0 0;">17h34m</div>
<div class="in" style="left:260.5px;top:813.0px;width:124.0px;height:36.0px;background:#d5d5d3"></div>
<div class="t" style="left:267.5px;top:820.1px;font-size:26.0px;color:#a81414;transform:scaleX(0.870);transform-origin:0 0;">23h47m</div>
<div class="t" style="left:11.3px;top:855.7px;font-size:19.5px;color:#1a1a1a;">RA Epoch</div>
<div class="t" style="left:203.0px;top:855.7px;font-size:19.5px;color:#1a1a1a;">DE Epoch</div>
<div class="in" style="left:5.5px;top:879.5px;width:188.0px;height:36.5px;background:#d0d0ff"></div>
<div class="t" style="left:12.5px;top:886.9px;font-size:26.0px;color:#1c1c1c;transform:scaleX(0.870);transform-origin:0 0;">1994.45</div>
<div class="in" style="left:197.5px;top:879.5px;width:187.0px;height:36.5px;background:#d0d0ff"></div>
<div class="t" style="left:204.5px;top:886.9px;font-size:26.0px;color:#1c1c1c;transform:scaleX(0.870);transform-origin:0 0;">1995.43</div>
<div class="t" style="left:11.3px;top:923.8px;font-size:19.0px;color:#1a1a1a;">B, V, g, r and i Mags</div>
<div class="t" style="left:203.0px;top:923.8px;font-size:19.0px;color:#1a1a1a;">J, H, Ks Mags</div>
<div class="in" style="left:5.5px;top:947.5px;width:188.0px;height:35.5px;background:#d0d0ff"></div>
<div class="t" style="left:12.5px;top:954.4px;font-size:26.0px;color:#1c1c1c;transform:scaleX(0.870);transform-origin:0 0;">11.803 / 11.418 /</div>
<div class="in" style="left:197.5px;top:947.5px;width:187.0px;height:35.5px;background:#d0d0ff"></div>
<div class="t" style="left:204.5px;top:954.4px;font-size:26.0px;color:#1c1c1c;transform:scaleX(0.870);transform-origin:0 0;">10.843 / 10.735 /</div>
<div class="t" style="left:11.3px;top:991.6px;font-size:19.0px;color:#1a1a1a;">JHKs cc_flg/ph_flg</div>
<div class="t" style="left:203.0px;top:991.6px;font-size:19.0px;color:#1a1a1a;">JHKs phot. Err.</div>
<div class="in" style="left:5.5px;top:1016.0px;width:188.0px;height:35.5px;background:#d0d0ff"></div>
<div class="t" style="left:12.5px;top:1022.9px;font-size:26.0px;color:#1c1c1c;transform:scaleX(0.870);transform-origin:0 0;">0, 0, 0 / 5, 5, 5</div>
<div class="in" style="left:197.5px;top:1016.0px;width:187.0px;height:35.5px;background:#d0d0ff"></div>
<div class="t" style="left:204.5px;top:1022.9px;font-size:26.0px;color:#1c1c1c;transform:scaleX(0.870);transform-origin:0 0;">0.03 / 0.02 / 0.02</div>
<div class="t" style="left:9.0px;top:1056.7px;font-size:19.5px;color:#1a1a1a;">Object Type</div>
<div class="in" style="left:5.5px;top:1082.0px;width:378.0px;height:37.0px;background:#d0d0ff"></div>
<div class="t" style="left:12.5px;top:1089.6px;font-size:26.0px;color:#1c1c1c;transform:scaleX(0.870);transform-origin:0 0;">0 - clean star</div>
<div class="t" style="left:11.3px;top:1123.5px;font-size:19.5px;color:#8a8a8a;">Lumin.</div>
<div class="t" style="left:81.2px;top:1123.5px;font-size:19.5px;color:#1a1a1a;">Mag. Error</div>
<div class="t" style="left:232.4px;top:1123.5px;font-size:19.5px;color:#1a1a1a;">DST</div>
<div class="t" style="left:314.7px;top:1123.5px;font-size:19.5px;color:#1a1a1a;">DSF</div>
<div class="in" style="left:5.5px;top:1149.5px;width:66.5px;height:36.0px;background:#f0f0f0"></div>
<div class="in" style="left:77.5px;top:1149.5px;width:143.5px;height:36.0px;background:#d0d0ff"></div>
<div class="t" style="left:84.5px;top:1156.6px;font-size:26.0px;color:#1c1c1c;transform:scaleX(0.870);transform-origin:0 0;">0.04</div>
<div class="in" style="left:228.0px;top:1149.5px;width:75.5px;height:36.0px;background:#d0d0ff"></div>
<div class="t" style="left:235.0px;top:1156.6px;font-size:26.0px;color:#1c1c1c;transform:scaleX(0.870);transform-origin:0 0;">0</div>
<div class="in" style="left:310.0px;top:1149.5px;width:71.5px;height:36.0px;background:#d0d0ff"></div>
<div class="t" style="left:317.0px;top:1156.6px;font-size:26.0px;color:#1c1c1c;transform:scaleX(0.870);transform-origin:0 0;">0</div>
<div class="t" style="left:11.3px;top:1191.1px;font-size:19.5px;color:#1a1a1a;">Fit M.</div>
<div class="t" style="left:82.3px;top:1191.1px;font-size:19.5px;color:#1a1a1a;">Aper.</div>
<div class="t" style="left:155.7px;top:1191.1px;font-size:19.5px;color:#8a8a8a;">Surf.B.</div>
<div class="t" style="left:228.0px;top:1191.1px;font-size:19.5px;color:#1a1a1a;">RA Err.</div>
<div class="t" style="left:310.0px;top:1191.1px;font-size:19.5px;color:#1a1a1a;">DE Err.</div>
<div class="in" style="left:5.5px;top:1216.0px;width:66.5px;height:36.5px;background:#d0d0ff"></div>
<div class="t" style="left:12.5px;top:1223.4px;font-size:26.0px;color:#1c1c1c;transform:scaleX(0.870);transform-origin:0 0;">11.48</div>
<div class="in" style="left:77.5px;top:1216.0px;width:66.0px;height:36.5px;background:#d0d0ff"></div>
<div class="t" style="left:84.5px;top:1223.4px;font-size:26.0px;color:#1c1c1c;transform:scaleX(0.870);transform-origin:0 0;">11.46</div>
<div class="in" style="left:150.0px;top:1216.0px;width:66.5px;height:36.5px;background:#f0f0f0"></div>
<div class="in" style="left:223.5px;top:1216.0px;width:75.5px;height:36.5px;background:#d0d0ff"></div>
<div class="t" style="left:230.5px;top:1223.4px;font-size:26.0px;color:#1c1c1c;transform:scaleX(0.870);transform-origin:0 0;">17</div>
<div class="in" style="left:305.5px;top:1216.0px;width:76.0px;height:36.5px;background:#d0d0ff"></div>
<div class="t" style="left:312.5px;top:1223.4px;font-size:26.0px;color:#1c1c1c;transform:scaleX(0.870);transform-origin:0 0;">19</div>
<div class="t" style="left:11.0px;top:1258.0px;font-size:19.5px;color:#1a1a1a;">RA pm</div>
<div class="t" style="left:107.6px;top:1258.0px;font-size:19.5px;color:#1a1a1a;">DE pm</div>
<div class="t" style="left:207.5px;top:1258.0px;font-size:19.5px;color:#1a1a1a;">Er RA pm</div>
<div class="t" style="left:305.8px;top:1258.0px;font-size:19.5px;color:#1a1a1a;">Er DE pm</div>
<div class="in" style="left:6.0px;top:1283.5px;width:92.5px;height:36.5px;background:#d0d0ff"></div>
<div class="t" style="left:13.0px;top:1290.9px;font-size:26.0px;color:#1c1c1c;transform:scaleX(0.870);transform-origin:0 0;">11.1</div>
<div class="in" style="left:103.0px;top:1283.5px;width:92.0px;height:36.5px;background:#d0d0ff"></div>
<div class="t" style="left:110.0px;top:1290.9px;font-size:26.0px;color:#1c1c1c;transform:scaleX(0.870);transform-origin:0 0;">-3.2</div>
<div class="in" style="left:203.0px;top:1283.5px;width:92.0px;height:36.5px;background:#d0d0ff"></div>
<div class="t" style="left:210.0px;top:1290.9px;font-size:26.0px;color:#1c1c1c;transform:scaleX(0.870);transform-origin:0 0;">1.1</div>
<div class="in" style="left:301.0px;top:1283.5px;width:84.5px;height:36.5px;background:#d0d0ff"></div>
<div class="t" style="left:308.0px;top:1290.9px;font-size:26.0px;color:#1c1c1c;transform:scaleX(0.870);transform-origin:0 0;">1.2</div>
<div class="t" style="left:11.0px;top:1323.5px;font-size:19.5px;color:#1a1a1a;">Other Information</div>
<div class="in" style="left:6.0px;top:1349.0px;width:379.5px;height:155.0px;background:#d0d0ff"></div>
<div class="a" style="left:348px;top:1351px;width:35.5px;height:151px;background:#f0f0f0"></div>
<div class="a" style="left:349.5px;top:1390px;width:32.5px;height:36px;background:#cdcdcd"></div>
<svg class="a" style="left:348px;top:1351px" width="36" height="152"><path d="M11 25 L18 18 L25 25" fill="none" stroke="#606060" stroke-width="2.6"/><path d="M11 131 L18 138 L25 131" fill="none" stroke="#606060" stroke-width="2.6"/></svg>
<div class="t" style="left:12.0px;top:1359.9px;font-size:18.0px;color:#151515;transform:scaleX(1.075);transform-origin:0 0;">RA (eq. date):&nbsp; 22h 01m 57.80s</div>
<div class="t" style="left:12.0px;top:1383.3px;font-size:18.0px;color:#151515;transform:scaleX(1.075);transform-origin:0 0;">DE (eq. date):&nbsp; +02° 26' 43.01''</div>
<div class="t" style="left:12.0px;top:1406.7px;font-size:18.0px;color:#151515;transform:scaleX(1.075);transform-origin:0 0;">Double Star Flag: single star</div>
<div class="t" style="left:12.0px;top:1430.1px;font-size:18.0px;color:#151515;transform:scaleX(1.075);transform-origin:0 0;">Double Star Type: No double star</div>
<div class="t" style="left:12.0px;top:1453.5px;font-size:18.0px;color:#151515;transform:scaleX(1.075);transform-origin:0 0;">Total # of CCD images: 4</div>
<div class="t" style="left:12.0px;top:1476.9px;font-size:18.0px;color:#151515;transform:scaleX(1.075);transform-origin:0 0;"># of CCD images used: 4</div>
<div class="in" style="left:6.0px;top:1722.0px;width:379.5px;height:38.0px;background:#f0f0f0"></div>
<div class="t" style="left:13.0px;top:1730.9px;font-size:26.0px;color:#1c1c1c;transform:scaleX(0.840);transform-origin:0 0;">Ready</div><svg class="a" style="left:0;top:0" width="2520" height="1738">
<defs><clipPath id="sk"><rect x="403.5" y="224.5" width="2107.0" height="1486.5"/></clipPath></defs>
<g clip-path="url(#sk)">
<line x1="717.9" y1="180.0" x2="-13.7" y2="1760.0" stroke="#858585" stroke-width="1.6"/>
<line x1="1041.3" y1="180.0" x2="312.4" y2="1760.0" stroke="#858585" stroke-width="1.6"/>
<line x1="1364.9" y1="180.0" x2="638.7" y2="1760.0" stroke="#858585" stroke-width="1.6"/>
<line x1="1687.4" y1="180.0" x2="964.5" y2="1760.0" stroke="#858585" stroke-width="1.6"/>
<line x1="2008.6" y1="180.0" x2="1290.4" y2="1760.0" stroke="#858585" stroke-width="1.6"/>
<line x1="2329.8" y1="180.0" x2="1618.4" y2="1760.0" stroke="#858585" stroke-width="1.6"/>
<line x1="2652.3" y1="180.0" x2="1940.4" y2="1760.0" stroke="#858585" stroke-width="1.6"/>
<line x1="2974.8" y1="180.0" x2="2264.2" y2="1760.0" stroke="#858585" stroke-width="1.6"/>
<line x1="350.0" y1="-412.5" x2="2600.0" y2="611.2" stroke="#858585" stroke-width="1.6"/>
<line x1="350.0" y1="-0.4" x2="2600.0" y2="1024.0" stroke="#858585" stroke-width="1.6"/>
<line x1="350.0" y1="415.9" x2="2600.0" y2="1438.8" stroke="#858585" stroke-width="1.6"/>
<line x1="350.0" y1="830.9" x2="2600.0" y2="1853.1" stroke="#858585" stroke-width="1.6"/>
<line x1="350.0" y1="1245.2" x2="2600.0" y2="2275.7" stroke="#858585" stroke-width="1.6"/>
<line x1="350.0" y1="1658.6" x2="2600.0" y2="2693.6" stroke="#858585" stroke-width="1.6"/>
<circle cx="1456.5" cy="969.8" r="1054.1" fill="none" stroke="#8a008a" stroke-width="2"/>
<rect x="654.5" y="426.5" width="1601.5" height="1082.5" fill="none" stroke="#d26a00" stroke-width="2.2"/>
</g>
<rect x="402.5" y="223.5" width="2109.0" height="1488.5" fill="none" stroke="#580000" stroke-width="2.4"/>
</svg><svg class="a" style="left:0;top:0" width="2520" height="1738">
<defs><clipPath id="sk2"><rect x="403.5" y="224" width="2107" height="1488.5"/></clipPath></defs><g clip-path="url(#sk2)">
<rect x="917.0" y="232.5" width="3" height="3" fill="#b4b400"/>
<rect x="862.5" y="258.5" width="3" height="3" fill="#b4b400"/>
<rect x="554.5" y="260.8" width="3" height="3" fill="#b4b400"/>
<rect x="532.8" y="293.5" width="3" height="3" fill="#b4b400"/>
<rect x="733.5" y="297.3" width="3" height="3" fill="#b4b400"/>
<rect x="858.8" y="287.1" width="3" height="3" fill="#b4b400"/>
<rect x="918.9" y="287.1" width="3" height="3" fill="#b4b400"/>
<rect x="1018.3" y="280.2" width="3" height="3" fill="#b4b400"/>
<circle cx="1292.6" cy="294.2" r="5" fill="#ffff00"/>
<rect x="1238.4" y="306.5" width="3" height="3" fill="#b4b400"/>
<rect x="506.9" y="330.1" width="3" height="3" fill="#b4b400"/>
<rect x="638.7" y="337.1" width="3" height="3" fill="#b4b400"/>
<rect x="802.3" y="338.9" width="3" height="3" fill="#b4b400"/>
<rect x="1100.1" y="332.5" width="3" height="3" fill="#b4b400"/>
<rect x="1003.0" y="343.1" width="3" height="3" fill="#b4b400"/>
<rect x="1240.2" y="336.5" width="3" height="3" fill="#b4b400"/>
<rect x="1397.5" y="343.1" width="3" height="3" fill="#b4b400"/>
<rect x="1452.3" y="343.4" width="7" height="7" fill="#ffff00"/>
<rect x="556.3" y="394.9" width="3" height="3" fill="#b4b400"/>
<circle cx="669.8" cy="396.4" r="8.3" fill="#ffff00"/>
<rect x="964.2" y="384.2" width="3" height="3" fill="#b4b400"/>
<circle cx="1148.8" cy="402.8" r="8.3" fill="#ffff00"/>
<rect x="1387.3" y="371.3" width="3" height="3" fill="#b4b400"/>
<rect x="1309.1" y="371.3" width="3" height="3" fill="#b4b400"/>
<circle cx="1431.3" cy="395.0" r="5" fill="#ffff00"/>
<rect x="646.5" y="412.0" width="3" height="3" fill="#b4b400"/>
<rect x="762.1" y="414.3" width="3" height="3" fill="#b4b400"/>
<rect x="504.5" y="416.1" width="3" height="3" fill="#b4b400"/>
<rect x="873.1" y="425.8" width="3" height="3" fill="#b4b400"/>
<rect x="1093.5" y="444.3" width="3" height="3" fill="#b4b400"/>
<rect x="1160.7" y="445.2" width="3" height="3" fill="#b4b400"/>
<circle cx="1508.3" cy="235.4" r="5" fill="#ffff00"/>
<rect x="1544.5" y="230.5" width="3" height="3" fill="#b4b400"/>
<rect x="1605.3" y="230.5" width="3" height="3" fill="#b4b400"/>
<rect x="1674.0" y="224.5" width="7" height="7" fill="#ffff00"/>
<rect x="1714.8" y="228.4" width="3" height="3" fill="#b4b400"/>
<rect x="1976.1" y="228.4" width="3" height="3" fill="#b4b400"/>
<rect x="1898.5" y="261.5" width="3" height="3" fill="#b4b400"/>
<rect x="1799.0" y="258.5" width="3" height="3" fill="#b4b400"/>
<rect x="2116.2" y="263.1" width="3" height="3" fill="#b4b400"/>
<rect x="2277.9" y="265.2" width="7" height="7" fill="#ffff00"/>
<rect x="2089.8" y="291.7" width="3" height="3" fill="#b4b400"/>
<rect x="2209.2" y="287.1" width="3" height="3" fill="#b4b400"/>
<rect x="2221.7" y="300.1" width="3" height="3" fill="#b4b400"/>
<rect x="2448.2" y="295.5" width="3" height="3" fill="#b4b400"/>
<rect x="1807.8" y="297.3" width="3" height="3" fill="#b4b400"/>
<rect x="1837.8" y="308.4" width="3" height="3" fill="#b4b400"/>
<rect x="1701.9" y="313.0" width="3" height="3" fill="#b4b400"/>
<rect x="2109.7" y="312.5" width="3" height="3" fill="#b4b400"/>
<rect x="2340.9" y="321.3" width="3" height="3" fill="#b4b400"/>
<rect x="2390.4" y="349.5" width="3" height="3" fill="#b4b400"/>
<rect x="2472.7" y="347.2" width="3" height="3" fill="#b4b400"/>
<rect x="1641.8" y="360.2" width="3" height="3" fill="#b4b400"/>
<rect x="1706.1" y="357.9" width="3" height="3" fill="#b4b400"/>
<rect x="2118.5" y="364.8" width="3" height="3" fill="#b4b400"/>
<rect x="1555.8" y="377.3" width="3" height="3" fill="#b4b400"/>
<rect x="1516.5" y="387.9" width="3" height="3" fill="#b4b400"/>
<rect x="1630.7" y="381.9" width="3" height="3" fill="#b4b400"/>
<rect x="1833.7" y="372.7" width="3" height="3" fill="#b4b400"/>
<rect x="1853.5" y="375.5" width="3" height="3" fill="#b4b400"/>
<rect x="2055.5" y="380.1" width="3" height="3" fill="#b4b400"/>
<rect x="2150.9" y="394.9" width="3" height="3" fill="#b4b400"/>
<rect x="2193.5" y="375.5" width="3" height="3" fill="#b4b400"/>
<rect x="2109.7" y="398.5" width="3" height="3" fill="#b4b400"/>
<rect x="1540.5" y="412.0" width="3" height="3" fill="#b4b400"/>
<rect x="1572.7" y="410.0" width="7" height="7" fill="#ffff00"/>
<rect x="2058.5" y="418.0" width="3" height="3" fill="#b4b400"/>
<rect x="2151.4" y="416.5" width="3" height="3" fill="#b4b400"/>
<rect x="2181.0" y="425.8" width="3" height="3" fill="#b4b400"/>
<rect x="2474.1" y="403.5" width="3" height="3" fill="#b4b400"/>
<rect x="1620.0" y="433.7" width="3" height="3" fill="#b4b400"/>
<rect x="2129.2" y="433.7" width="3" height="3" fill="#b4b400"/>
<rect x="2286.4" y="444.3" width="3" height="3" fill="#b4b400"/>
<rect x="1947.9" y="448.0" width="3" height="3" fill="#b4b400"/>
<circle cx="486.2" cy="847.0" r="8.3" fill="#ffff00"/>
<circle cx="612.5" cy="895.1" r="8.3" fill="#ffff00"/>
<circle cx="441.3" cy="998.1" r="8.3" fill="#ffff00"/>
<circle cx="557.2" cy="971.3" r="5" fill="#ffff00"/>
<circle cx="794.2" cy="729.5" r="5" fill="#ffff00"/>
<circle cx="857.9" cy="899.9" r="5" fill="#ffff00"/>
<rect x="615.0" y="552.8" width="7" height="7" fill="#ffffff"/>
<rect x="681.2" y="465.8" width="3" height="3" fill="#b4b400"/>
<rect x="520.0" y="496.6" width="3" height="3" fill="#b4b400"/>
<rect x="599.8" y="533.1" width="3" height="3" fill="#b4b400"/>
<rect x="740.1" y="546.0" width="3" height="3" fill="#b4b400"/>
<rect x="848.4" y="563.2" width="3" height="3" fill="#b4b400"/>
<rect x="894.5" y="574.0" width="3" height="3" fill="#b4b400"/>
<rect x="811.1" y="590.9" width="3" height="3" fill="#b4b400"/>
<rect x="869.3" y="602.1" width="3" height="3" fill="#b4b400"/>
<rect x="459.5" y="608.5" width="3" height="3" fill="#b4b400"/>
<rect x="649.5" y="586.9" width="3" height="3" fill="#b4b400"/>
<rect x="724.5" y="612.9" width="3" height="3" fill="#b4b400"/>
<rect x="517.5" y="636.5" width="3" height="3" fill="#b4b400"/>
<rect x="586.5" y="638.5" width="3" height="3" fill="#b4b400"/>
<rect x="615.0" y="649.0" width="3" height="3" fill="#b4b400"/>
<rect x="617.0" y="654.2" width="3" height="3" fill="#b4b400"/>
<rect x="612.5" y="662.2" width="3" height="3" fill="#b4b400"/>
<rect x="470.3" y="641.0" width="3" height="3" fill="#b4b400"/>
<rect x="465.9" y="647.5" width="3" height="3" fill="#b4b400"/>
<rect x="479.1" y="659.8" width="3" height="3" fill="#b4b400"/>
<rect x="524.0" y="659.8" width="3" height="3" fill="#b4b400"/>
<rect x="444.5" y="662.2" width="3" height="3" fill="#b4b400"/>
<rect x="463.5" y="677.5" width="3" height="3" fill="#b4b400"/>
<rect x="769.8" y="649.0" width="3" height="3" fill="#b4b400"/>
<rect x="806.7" y="625.7" width="3" height="3" fill="#b4b400"/>
<rect x="817.9" y="630.2" width="3" height="3" fill="#b4b400"/>
<rect x="696.8" y="683.9" width="3" height="3" fill="#b4b400"/>
<rect x="761.4" y="692.3" width="3" height="3" fill="#b4b400"/>
<rect x="815.5" y="714.4" width="3" height="3" fill="#b4b400"/>
<rect x="550.1" y="726.8" width="3" height="3" fill="#b4b400"/>
<rect x="752.5" y="778.5" width="3" height="3" fill="#b4b400"/>
<rect x="653.1" y="793.4" width="3" height="3" fill="#b4b400"/>
<rect x="625.5" y="809.5" width="3" height="3" fill="#b4b400"/>
<rect x="677.2" y="815.8" width="3" height="3" fill="#b4b400"/>
<rect x="716.1" y="843.5" width="3" height="3" fill="#b4b400"/>
<rect x="724.5" y="854.7" width="3" height="3" fill="#b4b400"/>
<rect x="732.1" y="847.5" width="3" height="3" fill="#b4b400"/>
<rect x="819.5" y="862.7" width="3" height="3" fill="#b4b400"/>
<rect x="877.5" y="862.7" width="3" height="3" fill="#b4b400"/>
<rect x="839.2" y="888.8" width="3" height="3" fill="#b4b400"/>
<rect x="805.1" y="904.0" width="3" height="3" fill="#b4b400"/>
<rect x="858.5" y="934.5" width="3" height="3" fill="#b4b400"/>
<rect x="759.0" y="961.8" width="3" height="3" fill="#b4b400"/>
<rect x="774.5" y="952.9" width="3" height="3" fill="#b4b400"/>
<rect x="543.7" y="960.5" width="3" height="3" fill="#b4b400"/>
<rect x="627.9" y="973.0" width="3" height="3" fill="#b4b400"/>
<rect x="452.7" y="1059.2" width="3" height="3" fill="#b4b400"/>
<rect x="608.2" y="1052.4" width="3" height="3" fill="#b4b400"/>
<rect x="662.0" y="1046.0" width="3" height="3" fill="#b4b400"/>
<rect x="675.2" y="1066.0" width="3" height="3" fill="#b4b400"/>
<rect x="655.1" y="931.7" width="3" height="3" fill="#b4b400"/>
<rect x="402.9" y="1064.8" width="3" height="3" fill="#b4b400"/>
<rect x="1093.8" y="444.5" width="3" height="3" fill="#b4b400"/>
<rect x="1160.8" y="444.5" width="3" height="3" fill="#b4b400"/>
<rect x="1139.1" y="487.5" width="3" height="3" fill="#b4b400"/>
<rect x="1350.5" y="472.5" width="3" height="3" fill="#b4b400"/>
<rect x="1462.7" y="483.4" width="3" height="3" fill="#b4b400"/>
<rect x="1557.3" y="483.5" width="7" height="7" fill="#ffff00"/>
<rect x="1583.5" y="467.8" width="3" height="3" fill="#b4b400"/>
<rect x="1686.8" y="461.4" width="3" height="3" fill="#b4b400"/>
<rect x="1562.1" y="519.9" width="3" height="3" fill="#b4b400"/>
<rect x="921.0" y="532.7" width="3" height="3" fill="#b4b400"/>
<rect x="1222.9" y="543.5" width="3" height="3" fill="#b4b400"/>
<rect x="1475.1" y="552.4" width="3" height="3" fill="#b4b400"/>
<rect x="1497.2" y="560.8" width="3" height="3" fill="#b4b400"/>
<rect x="1656.7" y="573.5" width="3" height="3" fill="#b4b400"/>
<rect x="894.9" y="573.5" width="3" height="3" fill="#b4b400"/>
<rect x="938.2" y="565.2" width="3" height="3" fill="#b4b400"/>
<rect x="949.5" y="567.5" width="3" height="3" fill="#b4b400"/>
<rect x="1139.1" y="576.0" width="3" height="3" fill="#b4b400"/>
<rect x="1055.3" y="586.9" width="3" height="3" fill="#b4b400"/>
<rect x="1059.3" y="584.8" width="3" height="3" fill="#b4b400"/>
<rect x="1440.6" y="578.0" width="3" height="3" fill="#b4b400"/>
<rect x="1434.6" y="584.8" width="3" height="3" fill="#b4b400"/>
<rect x="1240.2" y="597.3" width="3" height="3" fill="#b4b400"/>
<rect x="1287.9" y="595.3" width="3" height="3" fill="#b4b400"/>
<rect x="897.8" y="610.5" width="7" height="7" fill="#ffff00"/>
<rect x="977.5" y="623.3" width="3" height="3" fill="#b4b400"/>
<rect x="1033.3" y="627.4" width="3" height="3" fill="#b4b400"/>
<rect x="1115.5" y="631.8" width="3" height="3" fill="#b4b400"/>
<rect x="1320.4" y="625.3" width="3" height="3" fill="#b4b400"/>
<rect x="1532.1" y="636.2" width="3" height="3" fill="#b4b400"/>
<rect x="1620.3" y="640.5" width="3" height="3" fill="#b4b400"/>
<rect x="1668.0" y="634.2" width="3" height="3" fill="#b4b400"/>
<rect x="1055.3" y="657.8" width="3" height="3" fill="#b4b400"/>
<rect x="1135.1" y="657.8" width="3" height="3" fill="#b4b400"/>
<rect x="1236.2" y="649.0" width="3" height="3" fill="#b4b400"/>
<rect x="1247.4" y="655.8" width="3" height="3" fill="#b4b400"/>
<rect x="1262.2" y="657.8" width="3" height="3" fill="#b4b400"/>
<rect x="1274.7" y="659.8" width="3" height="3" fill="#b4b400"/>
<rect x="1398.1" y="659.8" width="3" height="3" fill="#b4b400"/>
<rect x="1366.1" y="673.1" width="3" height="3" fill="#b4b400"/>
<rect x="1451.9" y="679.1" width="3" height="3" fill="#b4b400"/>
<rect x="1590.2" y="683.9" width="3" height="3" fill="#b4b400"/>
<rect x="1371.7" y="697.1" width="3" height="3" fill="#b4b400"/>
<rect x="1320.4" y="714.4" width="3" height="3" fill="#b4b400"/>
<rect x="1233.8" y="720.4" width="3" height="3" fill="#b4b400"/>
<rect x="1482.0" y="709.5" width="3" height="3" fill="#b4b400"/>
<rect x="1544.5" y="714.4" width="3" height="3" fill="#b4b400"/>
<rect x="1458.3" y="726.4" width="3" height="3" fill="#b4b400"/>
<rect x="1469.1" y="724.8" width="3" height="3" fill="#b4b400"/>
<rect x="1670.0" y="726.8" width="3" height="3" fill="#b4b400"/>
<rect x="1070.2" y="726.4" width="3" height="3" fill="#b4b400"/>
<rect x="1100.2" y="746.5" width="7" height="7" fill="#ffff00"/>
<rect x="899.8" y="755.3" width="3" height="3" fill="#b4b400"/>
<circle cx="949.8" cy="764.0" r="5" fill="#ffff00"/>
<rect x="1098.2" y="772.1" width="3" height="3" fill="#b4b400"/>
<rect x="1264.2" y="768.1" width="3" height="3" fill="#b4b400"/>
<rect x="1356.8" y="759.3" width="3" height="3" fill="#b4b400"/>
<rect x="1411.4" y="755.3" width="3" height="3" fill="#b4b400"/>
<rect x="1449.9" y="753.3" width="3" height="3" fill="#b4b400"/>
<rect x="1503.6" y="746.5" width="3" height="3" fill="#b4b400"/>
<rect x="1619.9" y="744.0" width="3" height="3" fill="#b4b400"/>
<rect x="1628.3" y="761.3" width="3" height="3" fill="#b4b400"/>
<rect x="1346.0" y="785.3" width="3" height="3" fill="#b4b400"/>
<rect x="992.4" y="794.1" width="3" height="3" fill="#b4b400"/>
<rect x="1434.6" y="804.5" width="3" height="3" fill="#b4b400"/>
<rect x="1508.0" y="809.4" width="3" height="3" fill="#b4b400"/>
<rect x="1630.7" y="789.7" width="3" height="3" fill="#b4b400"/>
<rect x="1628.3" y="815.4" width="3" height="3" fill="#b4b400"/>
<rect x="1660.8" y="828.2" width="3" height="3" fill="#b4b400"/>
<rect x="1085.0" y="832.6" width="3" height="3" fill="#b4b400"/>
<rect x="1121.5" y="838.7" width="3" height="3" fill="#b4b400"/>
<rect x="1421.4" y="832.6" width="3" height="3" fill="#b4b400"/>
<rect x="1637.1" y="845.5" width="3" height="3" fill="#b4b400"/>
<rect x="1548.9" y="854.3" width="3" height="3" fill="#b4b400"/>
<rect x="1533.7" y="869.5" width="3" height="3" fill="#b4b400"/>
<rect x="1678.5" y="869.5" width="3" height="3" fill="#b4b400"/>
<rect x="1048.9" y="867.5" width="3" height="3" fill="#b4b400"/>
<rect x="878.5" y="862.7" width="3" height="3" fill="#b4b400"/>
<rect x="1276.7" y="873.5" width="3" height="3" fill="#b4b400"/>
<rect x="1154.4" y="888.8" width="7" height="7" fill="#ffff00"/>
<rect x="1318.4" y="899.5" width="3" height="3" fill="#b4b400"/>
<rect x="1273.0" y="908.5" width="3" height="3" fill="#b4b400"/>
<rect x="955.5" y="921.3" width="3" height="3" fill="#b4b400"/>
<rect x="1041.7" y="946.9" width="3" height="3" fill="#b4b400"/>
<rect x="1143.1" y="934.1" width="3" height="3" fill="#b4b400"/>
<rect x="1417.4" y="907.6" width="3" height="3" fill="#b4b400"/>
<rect x="1436.6" y="916.5" width="3" height="3" fill="#b4b400"/>
<rect x="1532.1" y="907.6" width="3" height="3" fill="#b4b400"/>
<rect x="1568.1" y="931.7" width="3" height="3" fill="#b4b400"/>
<rect x="1455.9" y="939.7" width="3" height="3" fill="#b4b400"/>
<rect x="908.5" y="963.8" width="3" height="3" fill="#b4b400"/>
<rect x="1397.7" y="977.0" width="3" height="3" fill="#b4b400"/>
<rect x="1434.6" y="987.8" width="3" height="3" fill="#b4b400"/>
<rect x="994.4" y="1003.1" width="3" height="3" fill="#b4b400"/>
<rect x="1130.3" y="998.6" width="3" height="3" fill="#b4b400"/>
<rect x="1300.3" y="1003.1" width="3" height="3" fill="#b4b400"/>
<rect x="1335.2" y="1017.9" width="3" height="3" fill="#b4b400"/>
<rect x="1573.0" y="1001.1" width="3" height="3" fill="#b4b400"/>
<rect x="1663.2" y="1031.1" width="3" height="3" fill="#b4b400"/>
<rect x="1162.8" y="1057.2" width="3" height="3" fill="#b4b400"/>
<rect x="1031.3" y="1063.2" width="3" height="3" fill="#b4b400"/>
<rect x="897.3" y="1065.2" width="3" height="3" fill="#b4b400"/>
<rect x="1432.2" y="1063.2" width="3" height="3" fill="#b4b400"/>
<rect x="1792.7" y="459.8" width="7" height="7" fill="#ffff00"/>
<circle cx="1953.8" cy="493.3" r="10" fill="#ffff00"/>
<rect x="1948.3" y="448.5" width="3" height="3" fill="#b4b400"/>
<rect x="1993.6" y="457.7" width="3" height="3" fill="#b4b400"/>
<rect x="2093.0" y="474.6" width="3" height="3" fill="#b4b400"/>
<rect x="2286.7" y="444.5" width="3" height="3" fill="#b4b400"/>
<circle cx="2356.4" cy="483.3" r="5" fill="#ffff00"/>
<circle cx="2272.2" cy="502.2" r="5" fill="#ffff00"/>
<rect x="1757.8" y="530.7" width="3" height="3" fill="#b4b400"/>
<rect x="1706.5" y="547.5" width="3" height="3" fill="#b4b400"/>
<rect x="2196.1" y="545.5" width="3" height="3" fill="#b4b400"/>
<rect x="2191.7" y="562.8" width="3" height="3" fill="#b4b400"/>
<rect x="2150.8" y="579.6" width="3" height="3" fill="#b4b400"/>
<rect x="2411.8" y="552.4" width="3" height="3" fill="#b4b400"/>
<rect x="2338.8" y="567.6" width="3" height="3" fill="#b4b400"/>
<rect x="2291.1" y="580.0" width="3" height="3" fill="#b4b400"/>
<rect x="2134.8" y="604.1" width="3" height="3" fill="#b4b400"/>
<circle cx="2265.8" cy="608.4" r="5" fill="#ffff00"/>
<rect x="2295.9" y="599.7" width="3" height="3" fill="#b4b400"/>
<rect x="2312.4" y="612.9" width="3" height="3" fill="#b4b400"/>
<rect x="2375.3" y="614.9" width="3" height="3" fill="#b4b400"/>
<rect x="1848.9" y="614.9" width="3" height="3" fill="#b4b400"/>
<rect x="1812.4" y="627.8" width="3" height="3" fill="#b4b400"/>
<rect x="1920.2" y="625.3" width="3" height="3" fill="#b4b400"/>
<rect x="1933.5" y="623.3" width="3" height="3" fill="#b4b400"/>
<rect x="1970.0" y="610.5" width="3" height="3" fill="#b4b400"/>
<rect x="2006.4" y="621.3" width="3" height="3" fill="#b4b400"/>
<rect x="2088.2" y="632.2" width="3" height="3" fill="#b4b400"/>
<rect x="1906.6" y="649.4" width="3" height="3" fill="#b4b400"/>
<rect x="2248.2" y="625.3" width="3" height="3" fill="#b4b400"/>
<rect x="2198.5" y="647.0" width="3" height="3" fill="#b4b400"/>
<rect x="2317.2" y="657.8" width="3" height="3" fill="#b4b400"/>
<rect x="2340.8" y="651.4" width="3" height="3" fill="#b4b400"/>
<rect x="2025.7" y="668.7" width="3" height="3" fill="#e0e0e0"/>
<rect x="1982.8" y="688.3" width="3" height="3" fill="#b4b400"/>
<rect x="1846.5" y="699.1" width="3" height="3" fill="#b4b400"/>
<rect x="2172.8" y="703.1" width="3" height="3" fill="#b4b400"/>
<circle cx="2359.6" cy="700.6" r="8.3" fill="#ffff00"/>
<rect x="2382.1" y="697.1" width="3" height="3" fill="#b4b400"/>
<rect x="2452.7" y="710.0" width="3" height="3" fill="#b4b400"/>
<rect x="2116.7" y="718.4" width="3" height="3" fill="#b4b400"/>
<rect x="1887.8" y="722.8" width="3" height="3" fill="#b4b400"/>
<circle cx="1971.0" cy="741.5" r="7" fill="#ffff00"/>
<rect x="2006.5" y="735.6" width="3" height="3" fill="#b4b400"/>
<rect x="2042.9" y="733.6" width="3" height="3" fill="#b4b400"/>
<rect x="1706.5" y="740.0" width="3" height="3" fill="#b4b400"/>
<rect x="1807.5" y="742.0" width="3" height="3" fill="#b4b400"/>
<rect x="2297.9" y="740.0" width="3" height="3" fill="#b4b400"/>
<rect x="2144.4" y="752.9" width="3" height="3" fill="#b4b400"/>
<rect x="2502.4" y="750.8" width="3" height="3" fill="#b4b400"/>
<rect x="2395.0" y="761.3" width="3" height="3" fill="#b4b400"/>
<rect x="2017.3" y="768.1" width="3" height="3" fill="#b4b400"/>
<rect x="2191.7" y="782.9" width="3" height="3" fill="#b4b400"/>
<rect x="1961.1" y="794.1" width="3" height="3" fill="#b4b400"/>
<rect x="1972.0" y="787.7" width="3" height="3" fill="#b4b400"/>
<rect x="2036.5" y="796.2" width="3" height="3" fill="#b4b400"/>
<rect x="2163.6" y="815.8" width="3" height="3" fill="#b4b400"/>
<rect x="2366.5" y="809.4" width="3" height="3" fill="#b4b400"/>
<rect x="1747.5" y="835.1" width="3" height="3" fill="#b4b400"/>
<rect x="1826.8" y="828.6" width="3" height="3" fill="#b4b400"/>
<rect x="2075.4" y="841.1" width="3" height="3" fill="#b4b400"/>
<rect x="1913.8" y="854.3" width="3" height="3" fill="#b4b400"/>
<rect x="2090.6" y="862.7" width="3" height="3" fill="#b4b400"/>
<rect x="2192.5" y="856.7" width="7" height="7" fill="#ffff00"/>
<circle cx="2477.5" cy="837.8" r="5" fill="#ffff00"/>
<rect x="2026.1" y="878.4" width="3" height="3" fill="#b4b400"/>
<rect x="2034.5" y="880.4" width="3" height="3" fill="#b4b400"/>
<rect x="2191.7" y="890.8" width="3" height="3" fill="#b4b400"/>
<rect x="2248.2" y="899.6" width="3" height="3" fill="#b4b400"/>
<rect x="2440.3" y="888.8" width="3" height="3" fill="#b4b400"/>
<rect x="2289.1" y="910.8" width="7" height="7" fill="#ffff00"/>
<rect x="2280.7" y="930.1" width="7" height="7" fill="#ffff00"/>
<rect x="2405.8" y="914.9" width="7" height="7" fill="#ffff00"/>
<rect x="1814.4" y="906.0" width="3" height="3" fill="#b4b400"/>
<rect x="1937.5" y="938.5" width="3" height="3" fill="#b4b400"/>
<rect x="2222.1" y="944.9" width="3" height="3" fill="#b4b400"/>
<rect x="2340.8" y="944.9" width="3" height="3" fill="#b4b400"/>
<rect x="2370.9" y="944.9" width="3" height="3" fill="#b4b400"/>
<rect x="1728.2" y="962.1" width="3" height="3" fill="#b4b400"/>
<rect x="1829.2" y="957.7" width="3" height="3" fill="#b4b400"/>
<rect x="1982.8" y="996.6" width="3" height="3" fill="#b4b400"/>
<rect x="1836.0" y="1001.1" width="3" height="3" fill="#b4b400"/>
<rect x="1879.3" y="1003.1" width="3" height="3" fill="#b4b400"/>
<rect x="2198.5" y="992.6" width="3" height="3" fill="#b4b400"/>
<rect x="2403.8" y="1001.1" width="3" height="3" fill="#b4b400"/>
<rect x="2092.6" y="1033.5" width="7" height="7" fill="#ffffff"/>
<circle cx="1713.2" cy="1039.4" r="5" fill="#ffff00"/>
<rect x="2028.1" y="1027.1" width="3" height="3" fill="#b4b400"/>
<rect x="2185.7" y="1033.5" width="3" height="3" fill="#b4b400"/>
<rect x="1905.0" y="1057.2" width="3" height="3" fill="#b4b400"/>
<rect x="2000.0" y="1063.2" width="3" height="3" fill="#b4b400"/>
<rect x="2239.4" y="1072.0" width="7" height="7" fill="#ffff00"/>
<rect x="1704.5" y="1065.2" width="3" height="3" fill="#b4b400"/>
<rect x="446.3" y="1123.5" width="3" height="3" fill="#b4b400"/>
<rect x="543.2" y="1136.9" width="3" height="3" fill="#b4b400"/>
<rect x="470.4" y="1160.5" width="3" height="3" fill="#b4b400"/>
<rect x="627.5" y="1156.5" width="3" height="3" fill="#b4b400"/>
<rect x="619.0" y="1167.1" width="3" height="3" fill="#b4b400"/>
<rect x="796.1" y="1102.7" width="3" height="3" fill="#b4b400"/>
<rect x="1031.1" y="1076.6" width="3" height="3" fill="#b4b400"/>
<rect x="1166.7" y="1136.9" width="3" height="3" fill="#b4b400"/>
<rect x="709.8" y="1173.5" width="3" height="3" fill="#b4b400"/>
<rect x="781.1" y="1190.7" width="3" height="3" fill="#e0e0e0"/>
<rect x="718.4" y="1203.7" width="3" height="3" fill="#b4b400"/>
<rect x="724.5" y="1216.7" width="3" height="3" fill="#b4b400"/>
<rect x="772.1" y="1218.8" width="3" height="3" fill="#b4b400"/>
<rect x="856.4" y="1218.8" width="3" height="3" fill="#b4b400"/>
<rect x="862.5" y="1214.7" width="3" height="3" fill="#b4b400"/>
<rect x="994.4" y="1160.5" width="3" height="3" fill="#b4b400"/>
<rect x="1024.6" y="1149.9" width="3" height="3" fill="#b4b400"/>
<rect x="1022.5" y="1158.5" width="3" height="3" fill="#b4b400"/>
<rect x="994.4" y="1171.5" width="3" height="3" fill="#b4b400"/>
<rect x="1113.0" y="1188.6" width="3" height="3" fill="#b4b400"/>
<rect x="539.2" y="1225.3" width="3" height="3" fill="#b4b400"/>
<rect x="410.1" y="1238.3" width="3" height="3" fill="#b4b400"/>
<rect x="434.1" y="1249.3" width="3" height="3" fill="#b4b400"/>
<rect x="664.2" y="1234.2" width="3" height="3" fill="#b4b400"/>
<rect x="569.8" y="1262.4" width="7" height="7" fill="#ffff00"/>
<circle cx="666.9" cy="1260.2" r="8.3" fill="#ffff00"/>
<rect x="694.7" y="1251.3" width="3" height="3" fill="#b4b400"/>
<rect x="849.9" y="1249.3" width="3" height="3" fill="#b4b400"/>
<rect x="897.1" y="1255.4" width="3" height="3" fill="#b4b400"/>
<rect x="908.1" y="1281.1" width="3" height="3" fill="#b4b400"/>
<rect x="994.4" y="1255.4" width="3" height="3" fill="#b4b400"/>
<rect x="1026.6" y="1233.8" width="3" height="3" fill="#b4b400"/>
<rect x="1031.1" y="1268.5" width="3" height="3" fill="#b4b400"/>
<rect x="1046.2" y="1268.5" width="3" height="3" fill="#b4b400"/>
<rect x="1137.0" y="1249.8" width="7" height="7" fill="#ffff00"/>
<circle cx="1191.0" cy="1260.2" r="5" fill="#ffff00"/>
<rect x="1130.5" y="1286.0" width="3" height="3" fill="#b4b400"/>
<rect x="1179.8" y="1294.9" width="3" height="3" fill="#b4b400"/>
<rect x="586.8" y="1296.5" width="3" height="3" fill="#b4b400"/>
<rect x="416.2" y="1311.6" width="3" height="3" fill="#b4b400"/>
<rect x="709.8" y="1311.6" width="3" height="3" fill="#b4b400"/>
<rect x="748.5" y="1331.2" width="3" height="3" fill="#b4b400"/>
<rect x="923.2" y="1315.7" width="3" height="3" fill="#b4b400"/>
<rect x="1046.2" y="1315.7" width="3" height="3" fill="#b4b400"/>
<rect x="474.0" y="1342.2" width="3" height="3" fill="#b4b400"/>
<rect x="964.3" y="1342.2" width="3" height="3" fill="#b4b400"/>
<rect x="998.5" y="1352.7" width="3" height="3" fill="#b4b400"/>
<rect x="418.2" y="1373.9" width="3" height="3" fill="#b4b400"/>
<rect x="505.0" y="1387.4" width="3" height="3" fill="#b4b400"/>
<rect x="692.7" y="1373.9" width="3" height="3" fill="#b4b400"/>
<rect x="739.9" y="1380.8" width="3" height="3" fill="#b4b400"/>
<rect x="745.6" y="1384.1" width="3" height="3" fill="#b4b400"/>
<rect x="843.4" y="1391.4" width="3" height="3" fill="#b4b400"/>
<rect x="957.4" y="1371.9" width="3" height="3" fill="#b4b400"/>
<rect x="1121.5" y="1369.9" width="3" height="3" fill="#b4b400"/>
<rect x="1196.9" y="1387.4" width="3" height="3" fill="#b4b400"/>
<rect x="403.2" y="1406.5" width="3" height="3" fill="#b4b400"/>
<rect x="459.4" y="1411.0" width="3" height="3" fill="#b4b400"/>
<rect x="477.3" y="1397.5" width="3" height="3" fill="#b4b400"/>
<rect x="565.2" y="1432.2" width="3" height="3" fill="#b4b400"/>
<rect x="1020.5" y="1404.5" width="3" height="3" fill="#b4b400"/>
<rect x="1147.6" y="1415.1" width="3" height="3" fill="#b4b400"/>
<rect x="522.5" y="1451.7" width="3" height="3" fill="#b4b400"/>
<rect x="418.2" y="1471.2" width="3" height="3" fill="#b4b400"/>
<rect x="535.1" y="1475.7" width="3" height="3" fill="#b4b400"/>
<rect x="979.4" y="1462.7" width="3" height="3" fill="#b4b400"/>
<rect x="1173.6" y="1471.2" width="3" height="3" fill="#b4b400"/>
<rect x="770.1" y="1484.3" width="3" height="3" fill="#b4b400"/>
<rect x="845.4" y="1479.8" width="3" height="3" fill="#b4b400"/>
<rect x="859.3" y="1497.3" width="3" height="3" fill="#b4b400"/>
<circle cx="914.9" cy="1495.6" r="5" fill="#ffff00"/>
<rect x="789.6" y="1506.7" width="3" height="3" fill="#b4b400"/>
<rect x="467.9" y="1542.5" width="3" height="3" fill="#b4b400"/>
<rect x="592.9" y="1551.5" width="3" height="3" fill="#b4b400"/>
<rect x="705.3" y="1542.5" width="3" height="3" fill="#b4b400"/>
<rect x="763.6" y="1551.5" width="3" height="3" fill="#b4b400"/>
<rect x="772.1" y="1573.1" width="3" height="3" fill="#b4b400"/>
<rect x="796.1" y="1574.7" width="3" height="3" fill="#b4b400"/>
<rect x="932.2" y="1574.7" width="3" height="3" fill="#b4b400"/>
<rect x="798.6" y="1598.7" width="3" height="3" fill="#b4b400"/>
<rect x="1117.9" y="1547.0" width="7" height="7" fill="#ffff00"/>
<circle cx="1147.0" cy="1585.1" r="8.3" fill="#ffff00"/>
<rect x="1087.3" y="1603.2" width="3" height="3" fill="#b4b400"/>
<rect x="1067.8" y="1613.4" width="3" height="3" fill="#b4b400"/>
<rect x="439.8" y="1585.7" width="3" height="3" fill="#b4b400"/>
<rect x="908.6" y="1624.4" width="7" height="7" fill="#ffff00"/>
<rect x="541.2" y="1635.4" width="3" height="3" fill="#b4b400"/>
<rect x="705.3" y="1667.5" width="3" height="3" fill="#b4b400"/>
<rect x="675.2" y="1698.1" width="3" height="3" fill="#b4b400"/>
<rect x="726.9" y="1702.2" width="3" height="3" fill="#b4b400"/>
<rect x="871.5" y="1704.2" width="3" height="3" fill="#b4b400"/>
<rect x="575.9" y="1705.9" width="7" height="7" fill="#ffff00"/>
<rect x="1346.1" y="1106.4" width="3" height="3" fill="#b4b400"/>
<rect x="1443.5" y="1102.3" width="3" height="3" fill="#b4b400"/>
<rect x="1538.0" y="1115.3" width="3" height="3" fill="#b4b400"/>
<rect x="1492.8" y="1139.0" width="3" height="3" fill="#b4b400"/>
<rect x="1592.2" y="1099.9" width="3" height="3" fill="#b4b400"/>
<rect x="1587.7" y="1132.5" width="3" height="3" fill="#b4b400"/>
<rect x="1695.6" y="1086.8" width="3" height="3" fill="#b4b400"/>
<rect x="1773.4" y="1117.4" width="3" height="3" fill="#b4b400"/>
<rect x="1760.4" y="1160.5" width="3" height="3" fill="#b4b400"/>
<rect x="1289.9" y="1173.6" width="3" height="3" fill="#b4b400"/>
<rect x="1568.5" y="1177.7" width="3" height="3" fill="#b4b400"/>
<rect x="1641.9" y="1165.1" width="7" height="7" fill="#ffff00"/>
<rect x="1620.3" y="1197.2" width="3" height="3" fill="#b4b400"/>
<rect x="1740.8" y="1208.2" width="3" height="3" fill="#b4b400"/>
<rect x="1244.7" y="1216.8" width="3" height="3" fill="#b4b400"/>
<circle cx="1352.9" cy="1301.4" r="5" fill="#ffff00"/>
<rect x="1367.7" y="1322.3" width="3" height="3" fill="#b4b400"/>
<rect x="1553.1" y="1259.9" width="3" height="3" fill="#b4b400"/>
<rect x="1700.1" y="1255.5" width="3" height="3" fill="#b4b400"/>
<rect x="1820.7" y="1264.0" width="3" height="3" fill="#b4b400"/>
<rect x="1724.2" y="1292.6" width="7" height="7" fill="#ffff00"/>
<circle cx="1722.0" cy="1317.7" r="5" fill="#ffff00"/>
<rect x="1825.2" y="1313.7" width="3" height="3" fill="#b4b400"/>
<rect x="1475.3" y="1303.1" width="3" height="3" fill="#b4b400"/>
<rect x="1501.3" y="1303.1" width="3" height="3" fill="#b4b400"/>
<rect x="1533.9" y="1307.6" width="3" height="3" fill="#b4b400"/>
<rect x="1492.8" y="1320.6" width="3" height="3" fill="#b4b400"/>
<rect x="1540.4" y="1320.6" width="3" height="3" fill="#b4b400"/>
<rect x="1585.6" y="1309.6" width="3" height="3" fill="#b4b400"/>
<rect x="1598.7" y="1339.4" width="3" height="3" fill="#b4b400"/>
<rect x="1687.1" y="1337.7" width="3" height="3" fill="#b4b400"/>
<rect x="1229.6" y="1333.3" width="3" height="3" fill="#b4b400"/>
<rect x="1238.2" y="1331.2" width="3" height="3" fill="#b4b400"/>
<rect x="1307.0" y="1357.3" width="3" height="3" fill="#b4b400"/>
<rect x="1311.5" y="1363.4" width="3" height="3" fill="#b4b400"/>
<rect x="1337.6" y="1354.9" width="3" height="3" fill="#b4b400"/>
<rect x="1244.7" y="1365.9" width="3" height="3" fill="#b4b400"/>
<rect x="1197.5" y="1387.4" width="3" height="3" fill="#b4b400"/>
<rect x="1561.6" y="1352.8" width="3" height="3" fill="#b4b400"/>
<rect x="1557.5" y="1374.0" width="3" height="3" fill="#b4b400"/>
<rect x="1622.3" y="1393.5" width="3" height="3" fill="#b4b400"/>
<rect x="1641.9" y="1387.4" width="3" height="3" fill="#b4b400"/>
<rect x="1700.1" y="1395.6" width="3" height="3" fill="#b4b400"/>
<rect x="1745.3" y="1393.5" width="3" height="3" fill="#b4b400"/>
<rect x="1795.0" y="1404.5" width="3" height="3" fill="#b4b400"/>
<rect x="1346.1" y="1413.1" width="3" height="3" fill="#b4b400"/>
<rect x="1438.6" y="1413.1" width="3" height="3" fill="#b4b400"/>
<rect x="1536.0" y="1432.2" width="3" height="3" fill="#b4b400"/>
<rect x="1540.4" y="1430.2" width="3" height="3" fill="#b4b400"/>
<rect x="1221.1" y="1447.7" width="3" height="3" fill="#b4b400"/>
<rect x="1346.1" y="1460.4" width="3" height="3" fill="#b4b400"/>
<rect x="1499.3" y="1464.8" width="3" height="3" fill="#b4b400"/>
<circle cx="1555.8" cy="1481.4" r="5" fill="#ffff00"/>
<rect x="1441.0" y="1495.0" width="3" height="3" fill="#b4b400"/>
<rect x="1452.5" y="1497.0" width="3" height="3" fill="#b4b400"/>
<rect x="1604.8" y="1503.5" width="3" height="3" fill="#b4b400"/>
<rect x="1531.9" y="1514.5" width="3" height="3" fill="#b4b400"/>
<rect x="1807.6" y="1490.9" width="3" height="3" fill="#b4b400"/>
<rect x="1830.0" y="1507.6" width="3" height="3" fill="#b4b400"/>
<rect x="1592.2" y="1553.2" width="3" height="3" fill="#b4b400"/>
<rect x="1721.7" y="1557.3" width="3" height="3" fill="#b4b400"/>
<rect x="1342.1" y="1562.2" width="3" height="3" fill="#b4b400"/>
<rect x="1410.9" y="1566.3" width="3" height="3" fill="#b4b400"/>
<rect x="1452.0" y="1562.2" width="3" height="3" fill="#b4b400"/>
<rect x="1471.6" y="1578.9" width="3" height="3" fill="#b4b400"/>
<rect x="1512.7" y="1585.8" width="3" height="3" fill="#b4b400"/>
<rect x="1585.6" y="1578.9" width="3" height="3" fill="#b4b400"/>
<circle cx="1850.3" cy="1590.6" r="5" fill="#ffff00"/>
<rect x="1432.5" y="1609.5" width="3" height="3" fill="#b4b400"/>
<rect x="1223.1" y="1650.2" width="3" height="3" fill="#b4b400"/>
<rect x="1406.4" y="1656.7" width="3" height="3" fill="#b4b400"/>
<rect x="1553.1" y="1656.7" width="3" height="3" fill="#b4b400"/>
<rect x="1723.3" y="1648.1" width="3" height="3" fill="#b4b400"/>
<rect x="1523.3" y="1682.8" width="3" height="3" fill="#b4b400"/>
<rect x="1518.4" y="1699.9" width="3" height="3" fill="#b4b400"/>
<rect x="1475.7" y="1697.9" width="7" height="7" fill="#ffff00"/>
<rect x="1816.6" y="1706.4" width="3" height="3" fill="#b4b400"/>
<rect x="2239.5" y="1072.6" width="7" height="7" fill="#ffff00"/>
<circle cx="2215.4" cy="1106.7" r="8.3" fill="#ffff00"/>
<circle cx="1874.4" cy="1118.1" r="5" fill="#ffff00"/>
<rect x="1857.5" y="1115.3" width="3" height="3" fill="#b4b400"/>
<rect x="2341.4" y="1106.4" width="3" height="3" fill="#b4b400"/>
<rect x="2435.9" y="1106.4" width="3" height="3" fill="#b4b400"/>
<circle cx="2473.6" cy="1167.8" r="5" fill="#ffff00"/>
<rect x="2004.1" y="1154.0" width="3" height="3" fill="#b4b400"/>
<rect x="2176.8" y="1154.0" width="3" height="3" fill="#b4b400"/>
<rect x="2269.7" y="1152.0" width="3" height="3" fill="#b4b400"/>
<rect x="2297.8" y="1165.5" width="3" height="3" fill="#b4b400"/>
<rect x="2384.1" y="1175.6" width="3" height="3" fill="#b4b400"/>
<rect x="2353.6" y="1188.7" width="3" height="3" fill="#b4b400"/>
<rect x="2008.2" y="1186.6" width="3" height="3" fill="#b4b400"/>
<rect x="2019.6" y="1193.1" width="3" height="3" fill="#b4b400"/>
<rect x="2250.5" y="1186.6" width="3" height="3" fill="#b4b400"/>
<rect x="2280.3" y="1212.3" width="3" height="3" fill="#b4b400"/>
<rect x="2295.3" y="1246.9" width="3" height="3" fill="#b4b400"/>
<rect x="2349.5" y="1242.8" width="3" height="3" fill="#b4b400"/>
<rect x="2043.2" y="1240.8" width="3" height="3" fill="#b4b400"/>
<rect x="2470.1" y="1257.9" width="7" height="7" fill="#ffffff"/>
<rect x="1881.5" y="1268.9" width="7" height="7" fill="#ffff00"/>
<rect x="1903.1" y="1266.9" width="3" height="3" fill="#b4b400"/>
<rect x="2191.9" y="1264.4" width="3" height="3" fill="#b4b400"/>
<rect x="2191.9" y="1292.5" width="3" height="3" fill="#b4b400"/>
<rect x="1889.6" y="1303.1" width="3" height="3" fill="#b4b400"/>
<rect x="2013.1" y="1316.6" width="7" height="7" fill="#ffff00"/>
<rect x="2235.1" y="1307.6" width="3" height="3" fill="#b4b400"/>
<rect x="2108.0" y="1329.2" width="3" height="3" fill="#b4b400"/>
<rect x="2097.0" y="1346.3" width="3" height="3" fill="#b4b400"/>
<rect x="2002.1" y="1344.3" width="3" height="3" fill="#b4b400"/>
<rect x="1922.2" y="1350.8" width="3" height="3" fill="#b4b400"/>
<rect x="2414.3" y="1326.7" width="3" height="3" fill="#b4b400"/>
<rect x="1872.5" y="1389.5" width="3" height="3" fill="#b4b400"/>
<rect x="2269.7" y="1378.9" width="3" height="3" fill="#b4b400"/>
<rect x="2487.6" y="1413.1" width="3" height="3" fill="#b4b400"/>
<rect x="2498.2" y="1426.1" width="3" height="3" fill="#b4b400"/>
<rect x="2491.7" y="1447.7" width="3" height="3" fill="#b4b400"/>
<rect x="2448.5" y="1471.4" width="3" height="3" fill="#b4b400"/>
<rect x="2502.7" y="1488.5" width="3" height="3" fill="#b4b400"/>
<rect x="2041.2" y="1445.7" width="3" height="3" fill="#b4b400"/>
<rect x="2110.0" y="1469.3" width="3" height="3" fill="#b4b400"/>
<rect x="2034.2" y="1503.5" width="3" height="3" fill="#b4b400"/>
<rect x="2077.8" y="1523.1" width="3" height="3" fill="#b4b400"/>
<rect x="2213.9" y="1516.6" width="3" height="3" fill="#b4b400"/>
<rect x="2189.8" y="1538.2" width="3" height="3" fill="#b4b400"/>
<rect x="2187.8" y="1553.2" width="3" height="3" fill="#b4b400"/>
<rect x="2125.1" y="1553.2" width="3" height="3" fill="#b4b400"/>
<rect x="2150.7" y="1587.8" width="3" height="3" fill="#b4b400"/>
<rect x="2431.4" y="1553.2" width="3" height="3" fill="#b4b400"/>
<rect x="2463.6" y="1566.3" width="3" height="3" fill="#b4b400"/>
<circle cx="1853.3" cy="1590.6" r="5" fill="#ffff00"/>
<rect x="1892.1" y="1574.8" width="3" height="3" fill="#b4b400"/>
<rect x="1885.6" y="1589.9" width="3" height="3" fill="#b4b400"/>
<rect x="2008.2" y="1577.3" width="3" height="3" fill="#b4b400"/>
<rect x="1918.2" y="1626.5" width="3" height="3" fill="#b4b400"/>
<rect x="1903.1" y="1642.0" width="3" height="3" fill="#b4b400"/>
<rect x="2297.8" y="1631.0" width="3" height="3" fill="#b4b400"/>
<rect x="2286.8" y="1657.1" width="3" height="3" fill="#b4b400"/>
<circle cx="2393.0" cy="1634.2" r="8.3" fill="#ffff00"/>
<rect x="2405.7" y="1669.7" width="3" height="3" fill="#b4b400"/>
<rect x="2405.7" y="1695.8" width="3" height="3" fill="#b4b400"/>
<rect x="2150.7" y="1669.7" width="3" height="3" fill="#b4b400"/>
<rect x="2023.7" y="1680.7" width="3" height="3" fill="#b4b400"/>
<rect x="2062.3" y="1689.3" width="3" height="3" fill="#b4b400"/>
<rect x="2101.9" y="1687.2" width="3" height="3" fill="#b4b400"/>
<rect x="1894.6" y="1676.3" width="7" height="7" fill="#ffff00"/>
<rect x="1924.7" y="1706.4" width="3" height="3" fill="#b4b400"/>
<rect x="1859.5" y="1708.5" width="3" height="3" fill="#b4b400"/>
<line x1="805" y1="941" x2="805" y2="973" stroke="#9a9a9a" stroke-width="1.5"/>
<line x1="805" y1="973" x2="1470" y2="973" stroke="#9a9a9a" stroke-width="1.6"/>
<path d="M801 973 H809 M805 969 V977" stroke="#10e010" stroke-width="1.5"/>
<g fill="#f04848">
<path d="M1475.7 925.0 L1481.7 935.0 L1478.2 956.0 L1473.2 956.0 L1469.7 935.0 Z"/>
<path d="M1475.7 1021.0 L1481.7 1011.0 L1478.2 990.0 L1473.2 990.0 L1469.7 1011.0 Z"/>
<path d="M1427.7 973.0 L1437.7 979.0 L1458.7 975.5 L1458.7 970.5 L1437.7 967.0 Z"/>
<path d="M1523.7 973.0 L1513.7 979.0 L1492.7 975.5 L1492.7 970.5 L1513.7 967.0 Z"/>
</g>
<path d="M1472.7 956.0 A17 17 0 0 0 1472.7 990.0" fill="none" stroke="#e02020" stroke-width="3"/>
<circle cx="1475.7" cy="973.0" r="15.5" fill="none" stroke="#30b8c0" stroke-width="3"/>
<path d="M1475.7 957.5 A15.5 15.5 0 0 1 1475.7 988.5" fill="none" stroke="#d0d0d0" stroke-width="2.5"/>
<path d="M1475.7 935.0 V958.0 M1475.7 988.0 V1011.0 M1437.7 973.0 H1460.7 M1490.7 973.0 H1513.7" stroke="#10b010" stroke-width="1.8"/>
<circle cx="1475.7" cy="973.0" r="4.5" fill="#30e030"/>
<line x1="1445.7" y1="958.0" x2="1459.7" y2="970.0" stroke="#c06010" stroke-width="1.5"/>
<line x1="1445.7" y1="981.0" x2="1457.7" y2="974.0" stroke="#c06010" stroke-width="1.5"/>
</g>
<rect x="631.5" y="275.5" width="80.5" height="29.0" fill="#000" stroke="#5e5e5e" stroke-width="1.8"/>
<text x="634.5" y="298.0" font-family="Liberation Sans" font-size="22.5" fill="#c4c4c4" textLength="74.5" lengthAdjust="spacingAndGlyphs">218°20'</text>
<rect x="898.6" y="249.3" width="69.4" height="26.8" fill="#000" stroke="#5e5e5e" stroke-width="1.8"/>
<text x="901.6" y="269.6" font-family="Liberation Sans" font-size="22.5" fill="#d8d880" textLength="63.4" lengthAdjust="spacingAndGlyphs">38°50'</text>
<rect x="1258.3" y="351.0" width="50.7" height="29.0" fill="#000" stroke="#5e5e5e" stroke-width="1.8"/>
<text x="1261.3" y="373.5" font-family="Liberation Sans" font-size="22.5" fill="#c4c4c4" textLength="44.7" lengthAdjust="spacingAndGlyphs">218°</text>
<rect x="896.3" y="399.6" width="83.2" height="27.7" fill="#000" stroke="#5e5e5e" stroke-width="1.8"/>
<text x="899.3" y="420.8" font-family="Liberation Sans" font-size="22.5" fill="#c4c4c4" textLength="77.2" lengthAdjust="spacingAndGlyphs">218°10'</text>
<rect x="1856.0" y="255.3" width="41.5" height="27.7" fill="#000" stroke="#5e5e5e" stroke-width="1.8"/>
<text x="1859.0" y="276.5" font-family="Liberation Sans" font-size="22.5" fill="#d8d880" textLength="35.5" lengthAdjust="spacingAndGlyphs">39°</text>
<rect x="1933.0" y="251.6" width="84.8" height="28.7" fill="#000" stroke="#5e5e5e" stroke-width="1.8"/>
<text x="1936.0" y="273.8" font-family="Liberation Sans" font-size="22.5" fill="#c4c4c4" textLength="78.8" lengthAdjust="spacingAndGlyphs">217°40'</text>
<rect x="1588.7" y="301.0" width="83.3" height="29.2" fill="#000" stroke="#5e5e5e" stroke-width="1.8"/>
<text x="1591.7" y="323.7" font-family="Liberation Sans" font-size="22.5" fill="#c4c4c4" textLength="77.3" lengthAdjust="spacingAndGlyphs">217°50'</text>
<rect x="2201.3" y="374.0" width="81.7" height="27.9" fill="#000" stroke="#5e5e5e" stroke-width="1.8"/>
<text x="2204.3" y="395.4" font-family="Liberation Sans" font-size="22.5" fill="#c4c4c4" textLength="75.7" lengthAdjust="spacingAndGlyphs">217°30'</text>
<rect x="473.0" y="450.0" width="68.6" height="26.9" fill="#000" stroke="#5e5e5e" stroke-width="1.8"/>
<text x="476.0" y="470.4" font-family="Liberation Sans" font-size="22.5" fill="#d8d880" textLength="62.6" lengthAdjust="spacingAndGlyphs">38°40'</text>
<rect x="447.3" y="853.0" width="71.0" height="26.9" fill="#000" stroke="#5e5e5e" stroke-width="1.8"/>
<text x="450.3" y="873.4" font-family="Liberation Sans" font-size="22.5" fill="#d8d880" textLength="65.0" lengthAdjust="spacingAndGlyphs">38°30'</text>
<rect x="423.8" y="1257.3" width="68.0" height="27.7" fill="#000" stroke="#5e5e5e" stroke-width="1.8"/>
<text x="426.8" y="1278.5" font-family="Liberation Sans" font-size="22.5" fill="#d8d880" textLength="62.0" lengthAdjust="spacingAndGlyphs">38°20'</text>
<rect x="2391.7" y="666.5" width="80.1" height="28.1" fill="#000" stroke="#5e5e5e" stroke-width="1.8"/>
<text x="2394.7" y="688.1" font-family="Liberation Sans" font-size="22.5" fill="#c4c4c4" textLength="74.1" lengthAdjust="spacingAndGlyphs">217°20'</text>
<rect x="2426.4" y="1303.0" width="82.6" height="27.7" fill="#000" stroke="#5e5e5e" stroke-width="1.8"/>
<text x="2429.4" y="1324.2" font-family="Liberation Sans" font-size="22.5" fill="#c4c4c4" textLength="76.6" lengthAdjust="spacingAndGlyphs">217°10'</text>
<text x="1417" y="420" font-family="Liberation Sans" font-size="22" fill="#b8b8b8" textLength="67" lengthAdjust="spacingAndGlyphs">IMX178</text>
<text x="805" y="931" font-family="Liberation Sans" font-weight="bold" font-size="23" fill="#b8c0c8" textLength="56" lengthAdjust="spacingAndGlyphs">19:27</text>
<text x="1476" y="930.5" font-family="Liberation Sans" font-weight="bold" font-size="23" fill="#c0b8b0" textLength="243" lengthAdjust="spacingAndGlyphs">11/18/2020 19:28:11 UT</text>
<rect x="472.7" y="222.8" width="88.8" height="30.2" fill="#ffc0c0"/>
<text x="494" y="247" font-family="Liberation Sans" font-size="24" fill="#a82020" textLength="46" lengthAdjust="spacingAndGlyphs">Field</text>
<rect x="566" y="222.8" width="88" height="30.2" fill="#808080"/>
<text x="571" y="247" font-family="Liberation Sans" font-size="24" fill="#dcdcdc" textLength="79" lengthAdjust="spacingAndGlyphs">Horizon</text>
<rect x="2336.7" y="224" width="79.6" height="26.7" fill="#808080"/>
<text x="2340" y="245" font-family="Liberation Sans" font-size="22" fill="#e8e870" textLength="72" lengthAdjust="spacingAndGlyphs">UCAC4</text>
<rect x="2418.6" y="224" width="92.4" height="26.7" fill="#008000"/>
<text x="2422" y="245" font-family="Liberation Sans" font-size="22" fill="#e0f070" textLength="85" lengthAdjust="spacingAndGlyphs">RNGCIC</text>
<circle cx="428.7" cy="252" r="20.5" fill="#000080" stroke="#c8c8e8" stroke-width="1.2"/>
<line x1="428.7" y1="232" x2="428.7" y2="253" stroke="#c8c080" stroke-width="2"/>
<g fill="#30d8d8"><polygon points="428.7,225 424,232 433.4,232"/><polygon points="428.7,279 424,272 433.4,272"/><polygon points="402,252 409,247.3 409,256.7"/><polygon points="455.5,252 448.5,247.3 448.5,256.7"/></g>
</svg><div class="t" style="left:394.7px;top:1728.2px;font-size:20.0px;color:#1a1a1a;">RA:</div>
<div class="in" style="left:435.0px;top:1724.0px;width:39.0px;height:36.0px;background:#f0f0f0"></div>
<div class="t" style="left:443.0px;top:1728.7px;font-size:24.0px;color:#a81414;transform:scaleX(0.850);transform-origin:0 0;">22</div>
<div class="in" style="left:476.5px;top:1724.0px;width:39.0px;height:36.0px;background:#f0f0f0"></div>
<div class="t" style="left:484.5px;top:1728.7px;font-size:24.0px;color:#a81414;transform:scaleX(0.850);transform-origin:0 0;">00</div>
<div class="in" style="left:518.0px;top:1724.0px;width:39.0px;height:36.0px;background:#f0f0f0"></div>
<div class="t" style="left:526.0px;top:1728.7px;font-size:24.0px;color:#a81414;transform:scaleX(0.850);transform-origin:0 0;">53</div>
<div class="t" style="left:569.0px;top:1728.2px;font-size:20.0px;color:#1a1a1a;">DE:</div>
<div class="in" style="left:610.5px;top:1724.0px;width:48.5px;height:36.0px;background:#f0f0f0"></div>
<div class="t" style="left:618.5px;top:1728.7px;font-size:24.0px;color:#a81414;transform:scaleX(0.850);transform-origin:0 0;">+02</div>
<div class="in" style="left:661.5px;top:1724.0px;width:39.0px;height:36.0px;background:#f0f0f0"></div>
<div class="t" style="left:669.5px;top:1728.7px;font-size:24.0px;color:#a81414;transform:scaleX(0.850);transform-origin:0 0;">20</div>
<div class="in" style="left:703.0px;top:1724.0px;width:39.0px;height:36.0px;background:#f0f0f0"></div>
<div class="t" style="left:711.0px;top:1728.7px;font-size:24.0px;color:#a81414;transform:scaleX(0.850);transform-origin:0 0;">46</div>
<div class="t" style="left:750.0px;top:1728.2px;font-size:20.0px;color:#1a1a1a;">Field:</div>
<div class="in" style="left:809.0px;top:1724.0px;width:51.0px;height:36.0px;background:#f0f0f0"></div>
<div class="t" style="left:817.0px;top:1728.7px;font-size:24.0px;color:#a81414;transform:scaleX(0.850);transform-origin:0 0;">00</div>
<div class="in" style="left:862.5px;top:1724.0px;width:39.0px;height:36.0px;background:#f0f0f0"></div>
<div class="t" style="left:870.5px;top:1728.7px;font-size:24.0px;color:#a81414;transform:scaleX(0.850);transform-origin:0 0;">55</div>
<div class="in" style="left:904.0px;top:1724.0px;width:36.5px;height:36.0px;background:#f0f0f0"></div>
<div class="t" style="left:912.0px;top:1728.7px;font-size:24.0px;color:#a81414;transform:scaleX(0.850);transform-origin:0 0;">51</div>
<svg class="a" style="left:0;top:1700px" width="2520" height="38">
<circle cx="964" cy="36" r="13" fill="#10d010" stroke="#087008" stroke-width="1"/><circle cx="993.5" cy="36" r="13" fill="#10d010" stroke="#087008" stroke-width="1"/>
<rect x="1019" y="20.3" width="224" height="30" fill="#ff0000"/>
<text x="1031.5" y="41" font-family="Liberation Sans" font-weight="bold" font-size="23" fill="#ffe040" textLength="191" lengthAdjust="spacingAndGlyphs">11/18/2020 19:28:11</text>
<circle cx="1268.2" cy="38" r="16" fill="#000090"/>
<path d="M1282 32 A16 16 0 0 1 1284 38" stroke="#e0e040" stroke-width="1.5" fill="none"/>
<rect x="1310.3" y="23.5" width="115" height="2.2" fill="#9a9a9a"/><rect x="1310.3" y="25.7" width="115" height="1.2" fill="#fff"/>
<path d="M1370 22 h6 v16 h-6 z" fill="#f0f0f0" stroke="#8a8a8a" stroke-width="1.5"/>
<rect x="1451.5" y="23.5" width="35.5" height="20" fill="#c0f8c0"/><rect x="1492.3" y="23.5" width="35.7" height="20" fill="#c0f8c0"/>
<rect x="1487" y="20" width="2" height="20" fill="#8a8a8a"/><rect x="1528" y="20" width="2" height="20" fill="#8a8a8a"/>
<path d="M1469 32 v10 M1463 38 h12" stroke="#1a3aa0" stroke-width="3"/>
<path d="M1503 38 h14" stroke="#1a3aa0" stroke-width="3"/>
<rect x="1535.8" y="21" width="178" height="20" fill="#e0e0e0"/>
<text x="1539" y="45" font-family="Liberation Sans" font-size="23" fill="#a82020" textLength="168" lengthAdjust="spacingAndGlyphs">JD: 2459172.31124</text>
</svg>
<div class="in" style="left:2258.0px;top:1723.6px;width:258.0px;height:36.4px;background:#f0f0f0"></div>
<div class="t" style="left:2265.0px;top:1728.7px;font-size:24.0px;color:#107010;transform:scaleX(0.860);transform-origin:0 0;">22h 00m 53s&nbsp;&nbsp; +02°34'00''</div></body></html>
